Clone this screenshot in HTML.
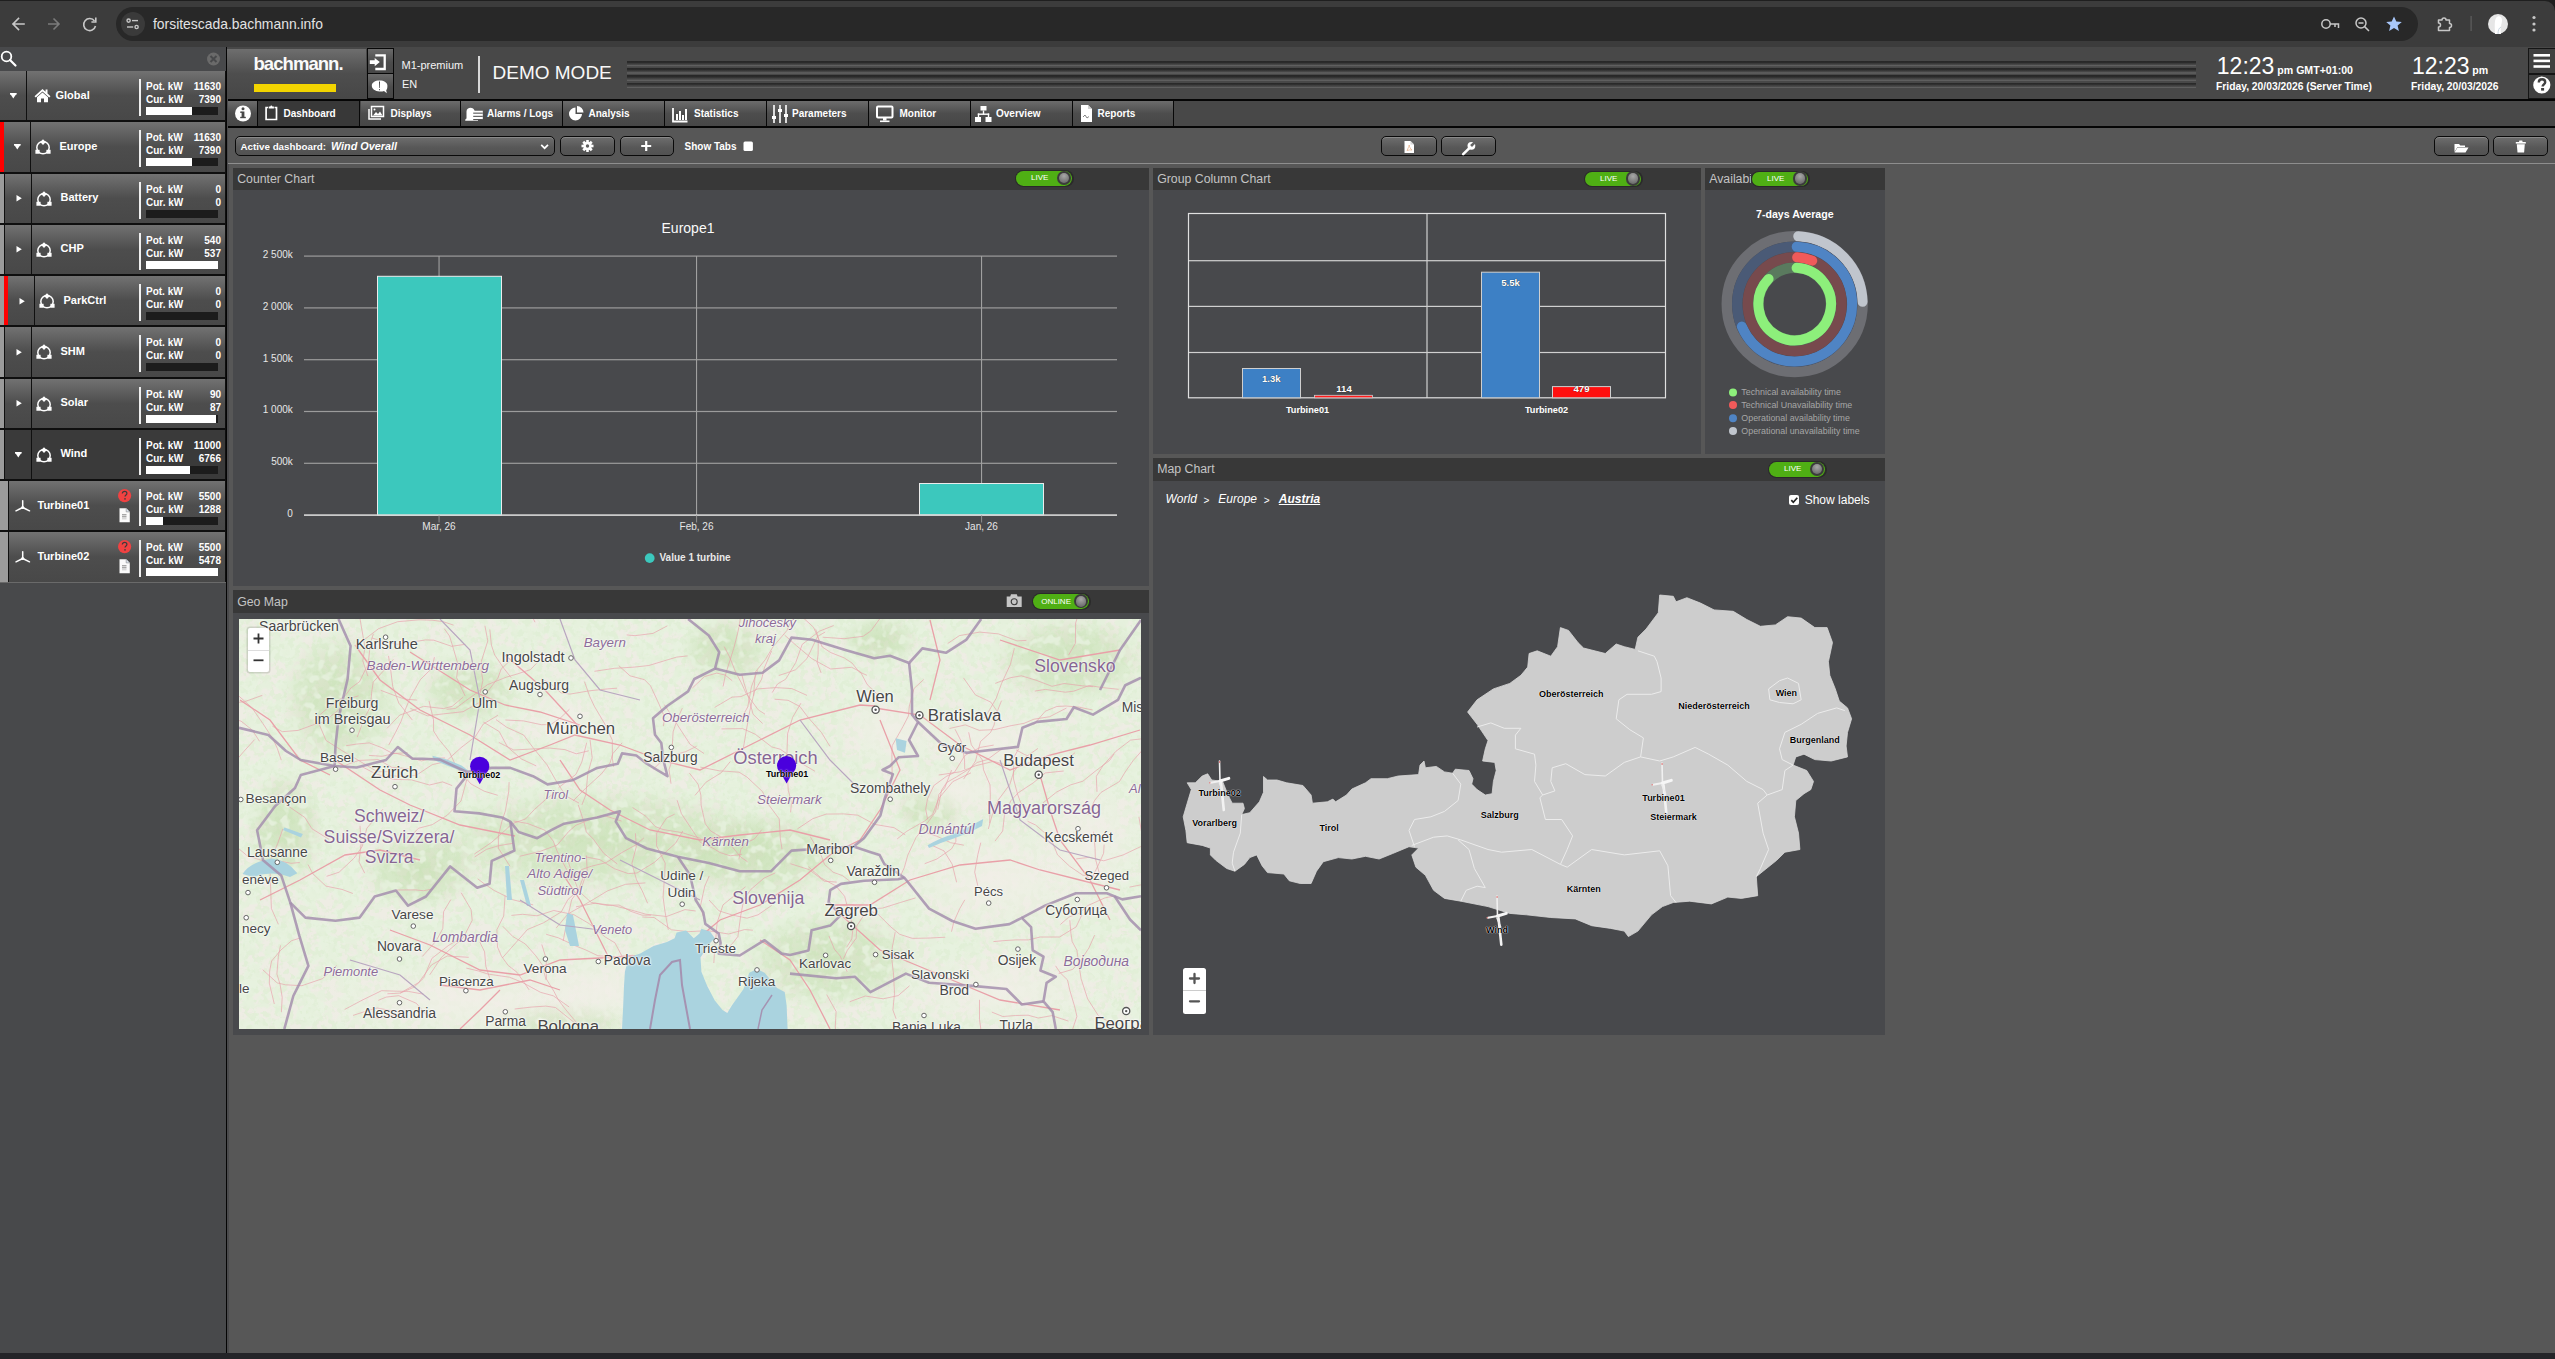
<!DOCTYPE html>
<html><head><meta charset="utf-8">
<style>
*{box-sizing:border-box;margin:0;padding:0}
html,body{width:2555px;height:1359px;overflow:hidden;background:#575757;font-family:"Liberation Sans",sans-serif;color:#fff}
.a{position:absolute}
.t{position:absolute;white-space:nowrap;line-height:1}
svg{position:absolute;overflow:visible}
.grad{background:linear-gradient(#727272 0%,#4d4d4d 50%,#484848 100%)}
.btn{position:absolute;border:1px solid #0a0a0a;border-radius:5px;background:linear-gradient(#6e6e6e,#575757 60%,#525252);box-shadow:inset 0 1px 0 #8a8a8a}
.ph{position:absolute;background:#383838}
.pb{position:absolute;background:#48494c}
.ptitle{position:absolute;font-size:12px;color:#c0c0c0;top:5px;left:5px;white-space:nowrap}
.tog{position:absolute;height:14px;border-radius:7px;background:#2f2f2f}
.tog b{position:absolute;left:1px;top:1px;bottom:1px;border-radius:6px;background:linear-gradient(#5cc21c,#3f9f0c);font-size:8px;color:#fff;text-align:center;line-height:12px;font-weight:bold}
.tog i{position:absolute;top:2px;width:10px;height:10px;border-radius:5px;background:#8a8a8a;border:1px solid #2a2a2a}
</style></head><body>


<div class="a" style="left:0;top:0;width:2555px;height:47px;background:#1f1f1f"></div>
<div class="a" style="left:0;top:1px;width:2555px;height:46px;background:#3c3c3c;border-top-right-radius:10px"></div>
<div class="a" style="left:116px;top:7px;width:2302px;height:34px;border-radius:17px;background:#282828"></div>
<div class="a" style="left:121px;top:12px;width:24px;height:24px;border-radius:12px;background:#3a3a3a"></div>
<svg style="left:0;top:0" width="2555" height="47">
 <g fill="none" stroke="#c7c7c7" stroke-width="1.6" stroke-linecap="square">
  <path d="M13 24 H24 M18.5 18.5 L13 24 L18.5 29.5"/>
 </g>
 <g fill="none" stroke="#7b7b7b" stroke-width="1.6">
  <path d="M48 24 H59 M53.5 18.5 L59 24 L53.5 29.5"/>
 </g>
 <g fill="none" stroke="#c7c7c7" stroke-width="1.6">
  <path d="M94.5 21 A6 6 0 1 0 95.5 26"/>
  <path d="M95.8 17.6 V22 H91.4" stroke-linejoin="miter"/>
 </g>
 <g fill="none" stroke="#c7c7c7" stroke-width="1.4">
  <circle cx="128.6" cy="20.6" r="1.6"/><path d="M132 20.6 H138"/>
  <circle cx="136.6" cy="27" r="1.6"/><path d="M127 27 H133.2"/>
 </g>
 <g fill="none" stroke="#c7c7c7" stroke-width="1.5">
  <circle cx="2326" cy="24" r="4.2"/><path d="M2330 24 H2338.5 V28 M2335 24 V27"/>
  <circle cx="2361" cy="23" r="5"/><path d="M2364.6 26.6 L2369 31 M2358.5 23 H2363.5"/>
  <path d="M2438.5 20 H2442 A2 2 0 0 1 2446 20 H2449.5 V23.5 A2 2 0 0 1 2449.5 27.5 V30.5 H2438.5 V27 A2 2 0 0 0 2438.5 23 Z" stroke-linejoin="round"/>
 </g>
 <path d="M2394 16.5 L2396.3 21.6 L2401.8 22 L2397.6 25.6 L2398.9 31 L2394 28.1 L2389.1 31 L2390.4 25.6 L2386.2 22 L2391.7 21.6 Z" fill="#a8c7fa"/>
 <rect x="2470.5" y="16" width="1.2" height="15" fill="#5f5f5f"/>
 <circle cx="2498" cy="24" r="10" fill="#e6e6e6"/>
 <path d="M2495 34 C2495 28 2494 22 2496 18 C2498 15 2502 16 2502 20 C2502 24 2500 27 2501 34 Z" fill="#ffffff"/>
 <path d="M2498 34 C2498 30 2499 28 2501 27" stroke="#c9d6e0" stroke-width="1" fill="none"/>
 <g fill="#c7c7c7"><circle cx="2534" cy="17.5" r="1.6"/><circle cx="2534" cy="24" r="1.6"/><circle cx="2534" cy="30" r="1.6"/></g>
</svg>
<div class="t" style="left:153px;top:18.3px;font-size:13.9px;color:#e3e3e3">forsitescada.bachmann.info</div>

<div class="a" style="left:0;top:47px;width:226px;height:1306px;background:#48494b"></div>
<div class="a" style="left:226px;top:47px;width:1.2px;height:1306px;background:#050505"></div><div class="a" style="left:227.2px;top:47px;width:1.5px;height:1306px;background:#4a4a4c"></div>
<div class="a" style="left:0;top:1353px;width:2555px;height:6px;background:#242428"></div>
<svg style="left:0;top:47px" width="226" height="24">
<circle cx="6.5" cy="9.5" r="4.8" fill="none" stroke="#fff" stroke-width="1.8"/>
<path d="M10 13 L15.5 18.5" stroke="#fff" stroke-width="2.2" stroke-linecap="round"/>
<circle cx="213.5" cy="12" r="6.5" fill="#6a6a6a"/>
<path d="M210.5 9 L216.5 15 M216.5 9 L210.5 15" stroke="#48494b" stroke-width="2"/>
</svg>
<div class="a" style="left:0;top:71px;width:226px;height:512px;background:#0f0f0f"></div>
<div class="a" style="left:0;top:71.0px;width:226px;height:49.25px;overflow:hidden"><div class="a grad" style="left:0px;top:0;width:26px;height:100%;"></div><svg style="left:10px;top:22px" width="8" height="7"><path d="M0 0.5 H6.6 L3.3 5.5Z" fill="#fff"/><rect x="0" y="0" width="6.6" height="1.6" fill="#fff"/></svg><div class="a" style="left:26px;top:0;width:1px;height:100%;background:#101010"></div><div class="a grad" style="left:27px;top:0;width:198px;height:100%;"></div><svg style="left:34px;top:17px" width="18" height="16"><path d="M8.5 1 L0.5 8.2 L1.8 9.5 L8.5 3.6 L15.2 9.5 L16.5 8.2 L13.5 5.4 V1.5 H11.6 V3.7 Z" fill="#fff"/><path d="M3 9.2 L8.5 4.6 L14 9.2 V14.2 H10 V10.6 H7 V14.2 H3Z" fill="#fff"/></svg><div class="t" style="left:55.5px;top:18.7px;font-size:11px;font-weight:bold">Global</div><div class="a" style="left:139px;top:8px;width:1.6px;height:37px;background:#f0f0f0"></div><div class="t" style="left:146px;top:11.2px;font-size:10px;font-weight:bold">Pot. kW</div><div class="t" style="right:5px;top:11.2px;font-size:10px;font-weight:bold">11630</div><div class="t" style="left:146px;top:24.2px;font-size:10px;font-weight:bold">Cur. kW</div><div class="t" style="right:5px;top:24.2px;font-size:10px;font-weight:bold">7390</div><div class="a" style="left:146px;top:36px;width:72px;height:8px;background:#1c1c1c"><div class="a" style="left:0;top:0;height:8px;width:45.7px;background:#fff"></div></div></div>
<div class="a" style="left:0;top:122.25px;width:226px;height:49.25px;overflow:hidden"><div class="a" style="left:0px;top:0;width:4px;height:100%;background:#ff0000"></div><div class="a grad" style="left:4px;top:0;width:26px;height:100%;"></div><svg style="left:14px;top:22px" width="8" height="7"><path d="M0 0.5 H6.6 L3.3 5.5Z" fill="#fff"/><rect x="0" y="0" width="6.6" height="1.6" fill="#fff"/></svg><div class="a" style="left:30px;top:0;width:1px;height:100%;background:#101010"></div><div class="a grad" style="left:31px;top:0;width:194px;height:100%;"></div><svg style="left:35.0px;top:17px" width="18" height="18"><circle cx="8" cy="8.6" r="6.2" fill="none" stroke="#fff" stroke-width="1.5"/>
<path d="M8 0.2 L10.8 3.1 L8 6 L5.2 3.1Z" fill="#fff"/><rect x="0.4" y="10.8" width="4.2" height="4" rx="0.3" fill="#fff"/><rect x="11.4" y="10.8" width="4.2" height="4" rx="0.3" fill="#fff"/></svg><div class="t" style="left:59.5px;top:18.7px;font-size:11px;font-weight:bold">Europe</div><div class="a" style="left:139px;top:8px;width:1.6px;height:37px;background:#f0f0f0"></div><div class="t" style="left:146px;top:11.2px;font-size:10px;font-weight:bold">Pot. kW</div><div class="t" style="right:5px;top:11.2px;font-size:10px;font-weight:bold">11630</div><div class="t" style="left:146px;top:24.2px;font-size:10px;font-weight:bold">Cur. kW</div><div class="t" style="right:5px;top:24.2px;font-size:10px;font-weight:bold">7390</div><div class="a" style="left:146px;top:36px;width:72px;height:8px;background:#1c1c1c"><div class="a" style="left:0;top:0;height:8px;width:45.7px;background:#fff"></div></div></div>
<div class="a" style="left:0;top:173.5px;width:226px;height:49.25px;overflow:hidden"><div class="a" style="left:0px;top:0;width:4px;height:100%;background:#9b9b9b"></div><div class="a" style="left:4px;top:0;width:1px;height:100%;background:#101010"></div><div class="a grad" style="left:5px;top:0;width:26px;height:100%;"></div><svg style="left:16px;top:21.5px" width="8" height="8"><path d="M0.5 0 V6.6 L5.8 3.3Z" fill="#fff"/></svg><div class="a" style="left:31px;top:0;width:1px;height:100%;background:#101010"></div><div class="a grad" style="left:32px;top:0;width:193px;height:100%;"></div><svg style="left:36.0px;top:17px" width="18" height="18"><circle cx="8" cy="8.6" r="6.2" fill="none" stroke="#fff" stroke-width="1.5"/>
<path d="M8 0.2 L10.8 3.1 L8 6 L5.2 3.1Z" fill="#fff"/><rect x="0.4" y="10.8" width="4.2" height="4" rx="0.3" fill="#fff"/><rect x="11.4" y="10.8" width="4.2" height="4" rx="0.3" fill="#fff"/></svg><div class="t" style="left:60.5px;top:18.7px;font-size:11px;font-weight:bold">Battery</div><div class="a" style="left:139px;top:8px;width:1.6px;height:37px;background:#f0f0f0"></div><div class="t" style="left:146px;top:11.2px;font-size:10px;font-weight:bold">Pot. kW</div><div class="t" style="right:5px;top:11.2px;font-size:10px;font-weight:bold">0</div><div class="t" style="left:146px;top:24.2px;font-size:10px;font-weight:bold">Cur. kW</div><div class="t" style="right:5px;top:24.2px;font-size:10px;font-weight:bold">0</div><div class="a" style="left:146px;top:36px;width:72px;height:8px;background:#1c1c1c"><div class="a" style="left:0;top:0;height:8px;width:0.0px;background:#fff"></div></div></div>
<div class="a" style="left:0;top:224.75px;width:226px;height:49.25px;overflow:hidden"><div class="a" style="left:0px;top:0;width:4px;height:100%;background:#9b9b9b"></div><div class="a" style="left:4px;top:0;width:1px;height:100%;background:#101010"></div><div class="a grad" style="left:5px;top:0;width:26px;height:100%;"></div><svg style="left:16px;top:21.5px" width="8" height="8"><path d="M0.5 0 V6.6 L5.8 3.3Z" fill="#fff"/></svg><div class="a" style="left:31px;top:0;width:1px;height:100%;background:#101010"></div><div class="a grad" style="left:32px;top:0;width:193px;height:100%;"></div><svg style="left:36.0px;top:17px" width="18" height="18"><circle cx="8" cy="8.6" r="6.2" fill="none" stroke="#fff" stroke-width="1.5"/>
<path d="M8 0.2 L10.8 3.1 L8 6 L5.2 3.1Z" fill="#fff"/><rect x="0.4" y="10.8" width="4.2" height="4" rx="0.3" fill="#fff"/><rect x="11.4" y="10.8" width="4.2" height="4" rx="0.3" fill="#fff"/></svg><div class="t" style="left:60.5px;top:18.7px;font-size:11px;font-weight:bold">CHP</div><div class="a" style="left:139px;top:8px;width:1.6px;height:37px;background:#f0f0f0"></div><div class="t" style="left:146px;top:11.2px;font-size:10px;font-weight:bold">Pot. kW</div><div class="t" style="right:5px;top:11.2px;font-size:10px;font-weight:bold">540</div><div class="t" style="left:146px;top:24.2px;font-size:10px;font-weight:bold">Cur. kW</div><div class="t" style="right:5px;top:24.2px;font-size:10px;font-weight:bold">537</div><div class="a" style="left:146px;top:36px;width:72px;height:8px;background:#1c1c1c"><div class="a" style="left:0;top:0;height:8px;width:72.0px;background:#fff"></div></div></div>
<div class="a" style="left:0;top:276.0px;width:226px;height:49.25px;overflow:hidden"><div class="a" style="left:0px;top:0;width:4px;height:100%;background:#9b9b9b"></div><div class="a" style="left:4px;top:0;width:4px;height:100%;background:#ff0000"></div><div class="a grad" style="left:8px;top:0;width:26px;height:100%;"></div><svg style="left:19px;top:21.5px" width="8" height="8"><path d="M0.5 0 V6.6 L5.8 3.3Z" fill="#fff"/></svg><div class="a" style="left:34px;top:0;width:1px;height:100%;background:#101010"></div><div class="a grad" style="left:35px;top:0;width:190px;height:100%;"></div><svg style="left:39.0px;top:17px" width="18" height="18"><circle cx="8" cy="8.6" r="6.2" fill="none" stroke="#fff" stroke-width="1.5"/>
<path d="M8 0.2 L10.8 3.1 L8 6 L5.2 3.1Z" fill="#fff"/><rect x="0.4" y="10.8" width="4.2" height="4" rx="0.3" fill="#fff"/><rect x="11.4" y="10.8" width="4.2" height="4" rx="0.3" fill="#fff"/></svg><div class="t" style="left:63.5px;top:18.7px;font-size:11px;font-weight:bold">ParkCtrl</div><div class="a" style="left:139px;top:8px;width:1.6px;height:37px;background:#f0f0f0"></div><div class="t" style="left:146px;top:11.2px;font-size:10px;font-weight:bold">Pot. kW</div><div class="t" style="right:5px;top:11.2px;font-size:10px;font-weight:bold">0</div><div class="t" style="left:146px;top:24.2px;font-size:10px;font-weight:bold">Cur. kW</div><div class="t" style="right:5px;top:24.2px;font-size:10px;font-weight:bold">0</div><div class="a" style="left:146px;top:36px;width:72px;height:8px;background:#1c1c1c"><div class="a" style="left:0;top:0;height:8px;width:0.0px;background:#fff"></div></div></div>
<div class="a" style="left:0;top:327.25px;width:226px;height:49.25px;overflow:hidden"><div class="a" style="left:0px;top:0;width:4px;height:100%;background:#9b9b9b"></div><div class="a" style="left:4px;top:0;width:1px;height:100%;background:#101010"></div><div class="a grad" style="left:5px;top:0;width:26px;height:100%;"></div><svg style="left:16px;top:21.5px" width="8" height="8"><path d="M0.5 0 V6.6 L5.8 3.3Z" fill="#fff"/></svg><div class="a" style="left:31px;top:0;width:1px;height:100%;background:#101010"></div><div class="a grad" style="left:32px;top:0;width:193px;height:100%;"></div><svg style="left:36.0px;top:17px" width="18" height="18"><circle cx="8" cy="8.6" r="6.2" fill="none" stroke="#fff" stroke-width="1.5"/>
<path d="M8 0.2 L10.8 3.1 L8 6 L5.2 3.1Z" fill="#fff"/><rect x="0.4" y="10.8" width="4.2" height="4" rx="0.3" fill="#fff"/><rect x="11.4" y="10.8" width="4.2" height="4" rx="0.3" fill="#fff"/></svg><div class="t" style="left:60.5px;top:18.7px;font-size:11px;font-weight:bold">SHM</div><div class="a" style="left:139px;top:8px;width:1.6px;height:37px;background:#f0f0f0"></div><div class="t" style="left:146px;top:11.2px;font-size:10px;font-weight:bold">Pot. kW</div><div class="t" style="right:5px;top:11.2px;font-size:10px;font-weight:bold">0</div><div class="t" style="left:146px;top:24.2px;font-size:10px;font-weight:bold">Cur. kW</div><div class="t" style="right:5px;top:24.2px;font-size:10px;font-weight:bold">0</div><div class="a" style="left:146px;top:36px;width:72px;height:8px;background:#1c1c1c"><div class="a" style="left:0;top:0;height:8px;width:0.0px;background:#fff"></div></div></div>
<div class="a" style="left:0;top:378.5px;width:226px;height:49.25px;overflow:hidden"><div class="a" style="left:0px;top:0;width:4px;height:100%;background:#9b9b9b"></div><div class="a" style="left:4px;top:0;width:1px;height:100%;background:#101010"></div><div class="a grad" style="left:5px;top:0;width:26px;height:100%;"></div><svg style="left:16px;top:21.5px" width="8" height="8"><path d="M0.5 0 V6.6 L5.8 3.3Z" fill="#fff"/></svg><div class="a" style="left:31px;top:0;width:1px;height:100%;background:#101010"></div><div class="a grad" style="left:32px;top:0;width:193px;height:100%;"></div><svg style="left:36.0px;top:17px" width="18" height="18"><circle cx="8" cy="8.6" r="6.2" fill="none" stroke="#fff" stroke-width="1.5"/>
<path d="M8 0.2 L10.8 3.1 L8 6 L5.2 3.1Z" fill="#fff"/><rect x="0.4" y="10.8" width="4.2" height="4" rx="0.3" fill="#fff"/><rect x="11.4" y="10.8" width="4.2" height="4" rx="0.3" fill="#fff"/></svg><div class="t" style="left:60.5px;top:18.7px;font-size:11px;font-weight:bold">Solar</div><div class="a" style="left:139px;top:8px;width:1.6px;height:37px;background:#f0f0f0"></div><div class="t" style="left:146px;top:11.2px;font-size:10px;font-weight:bold">Pot. kW</div><div class="t" style="right:5px;top:11.2px;font-size:10px;font-weight:bold">90</div><div class="t" style="left:146px;top:24.2px;font-size:10px;font-weight:bold">Cur. kW</div><div class="t" style="right:5px;top:24.2px;font-size:10px;font-weight:bold">87</div><div class="a" style="left:146px;top:36px;width:72px;height:8px;background:#1c1c1c"><div class="a" style="left:0;top:0;height:8px;width:70.2px;background:#fff"></div></div></div>
<div class="a" style="left:0;top:429.75px;width:226px;height:49.25px;overflow:hidden"><div class="a" style="left:0px;top:0;width:4px;height:100%;background:#9b9b9b"></div><div class="a" style="left:4px;top:0;width:1px;height:100%;background:#101010"></div><div class="a " style="left:5px;top:0;width:26px;height:100%;background:#3a3a3a"></div><svg style="left:15px;top:22px" width="8" height="7"><path d="M0 0.5 H6.6 L3.3 5.5Z" fill="#fff"/><rect x="0" y="0" width="6.6" height="1.6" fill="#fff"/></svg><div class="a" style="left:31px;top:0;width:1px;height:100%;background:#101010"></div><div class="a " style="left:32px;top:0;width:193px;height:100%;background:#3a3a3a"></div><svg style="left:36.0px;top:17px" width="18" height="18"><circle cx="8" cy="8.6" r="6.2" fill="none" stroke="#fff" stroke-width="1.5"/>
<path d="M8 0.2 L10.8 3.1 L8 6 L5.2 3.1Z" fill="#fff"/><rect x="0.4" y="10.8" width="4.2" height="4" rx="0.3" fill="#fff"/><rect x="11.4" y="10.8" width="4.2" height="4" rx="0.3" fill="#fff"/></svg><div class="t" style="left:60.5px;top:18.7px;font-size:11px;font-weight:bold">Wind</div><div class="a" style="left:139px;top:8px;width:1.6px;height:37px;background:#f0f0f0"></div><div class="t" style="left:146px;top:11.2px;font-size:10px;font-weight:bold">Pot. kW</div><div class="t" style="right:5px;top:11.2px;font-size:10px;font-weight:bold">11000</div><div class="t" style="left:146px;top:24.2px;font-size:10px;font-weight:bold">Cur. kW</div><div class="t" style="right:5px;top:24.2px;font-size:10px;font-weight:bold">6766</div><div class="a" style="left:146px;top:36px;width:72px;height:8px;background:#1c1c1c"><div class="a" style="left:0;top:0;height:8px;width:44.3px;background:#fff"></div></div></div>
<div class="a" style="left:0;top:481.0px;width:226px;height:49.25px;overflow:hidden"><div class="a" style="left:0px;top:0;width:8px;height:100%;background:#9b9b9b"></div><div class="a" style="left:8px;top:0;width:1px;height:100%;background:#101010"></div><div class="a grad" style="left:9px;top:0;width:216px;height:100%;"></div><svg style="left:14.5px;top:19px" width="18" height="14"><g stroke="#fff" stroke-width="1.5" stroke-linecap="round"><path d="M7.7 0.8 V7.5"/><path d="M7.7 7.5 L1 10.8"/><path d="M7.7 7.5 L14.5 10.8"/></g><circle cx="7.7" cy="7.5" r="1.6" fill="#fff"/></svg><div class="t" style="left:37.5px;top:18.7px;font-size:11px;font-weight:bold">Turbine01</div><svg style="left:118px;top:8px" width="14" height="14"><circle cx="6.6" cy="6.6" r="6.6" fill="#f04242"/><path d="M4.3 4.6 C4.3 3.2 5.3 2.4 6.6 2.4 C7.9 2.4 8.9 3.2 8.9 4.4 C8.9 5.9 7 6 7 7.6" fill="none" stroke="#3c3c3c" stroke-width="1.2"/><circle cx="7" cy="9.9" r="0.8" fill="#3c3c3c"/></svg><svg style="left:119px;top:27px" width="12" height="15"><path d="M0.5 0.3 H7.2 L10.8 3.9 V14.3 H0.5Z" fill="#fafafa"/><path d="M7.2 0.3 V3.9 H10.8" fill="#dde6f0" stroke="#777" stroke-width="0.5"/><path d="M3 6.8 H7.5 M3 8.8 H7.5" stroke="#666" stroke-width="0.8"/><path d="M3 10.8 H7.5" stroke="#bbb" stroke-width="0.8"/></svg><div class="a" style="left:139px;top:8px;width:1.6px;height:37px;background:#f0f0f0"></div><div class="t" style="left:146px;top:11.2px;font-size:10px;font-weight:bold">Pot. kW</div><div class="t" style="right:5px;top:11.2px;font-size:10px;font-weight:bold">5500</div><div class="t" style="left:146px;top:24.2px;font-size:10px;font-weight:bold">Cur. kW</div><div class="t" style="right:5px;top:24.2px;font-size:10px;font-weight:bold">1288</div><div class="a" style="left:146px;top:36px;width:72px;height:8px;background:#1c1c1c"><div class="a" style="left:0;top:0;height:8px;width:16.8px;background:#fff"></div></div></div>
<div class="a" style="left:0;top:532.25px;width:226px;height:49.25px;overflow:hidden"><div class="a" style="left:0px;top:0;width:8px;height:100%;background:#9b9b9b"></div><div class="a" style="left:8px;top:0;width:1px;height:100%;background:#101010"></div><div class="a grad" style="left:9px;top:0;width:216px;height:100%;"></div><svg style="left:14.5px;top:19px" width="18" height="14"><g stroke="#fff" stroke-width="1.5" stroke-linecap="round"><path d="M7.7 0.8 V7.5"/><path d="M7.7 7.5 L1 10.8"/><path d="M7.7 7.5 L14.5 10.8"/></g><circle cx="7.7" cy="7.5" r="1.6" fill="#fff"/></svg><div class="t" style="left:37.5px;top:18.7px;font-size:11px;font-weight:bold">Turbine02</div><svg style="left:118px;top:8px" width="14" height="14"><circle cx="6.6" cy="6.6" r="6.6" fill="#f04242"/><path d="M4.3 4.6 C4.3 3.2 5.3 2.4 6.6 2.4 C7.9 2.4 8.9 3.2 8.9 4.4 C8.9 5.9 7 6 7 7.6" fill="none" stroke="#3c3c3c" stroke-width="1.2"/><circle cx="7" cy="9.9" r="0.8" fill="#3c3c3c"/></svg><svg style="left:119px;top:27px" width="12" height="15"><path d="M0.5 0.3 H7.2 L10.8 3.9 V14.3 H0.5Z" fill="#fafafa"/><path d="M7.2 0.3 V3.9 H10.8" fill="#dde6f0" stroke="#777" stroke-width="0.5"/><path d="M3 6.8 H7.5 M3 8.8 H7.5" stroke="#666" stroke-width="0.8"/><path d="M3 10.8 H7.5" stroke="#bbb" stroke-width="0.8"/></svg><div class="a" style="left:139px;top:8px;width:1.6px;height:37px;background:#f0f0f0"></div><div class="t" style="left:146px;top:11.2px;font-size:10px;font-weight:bold">Pot. kW</div><div class="t" style="right:5px;top:11.2px;font-size:10px;font-weight:bold">5500</div><div class="t" style="left:146px;top:24.2px;font-size:10px;font-weight:bold">Cur. kW</div><div class="t" style="right:5px;top:24.2px;font-size:10px;font-weight:bold">5478</div><div class="a" style="left:146px;top:36px;width:72px;height:8px;background:#1c1c1c"><div class="a" style="left:0;top:0;height:8px;width:71.7px;background:#fff"></div></div></div>
<div class="a" style="left:0;top:581.5px;width:226px;height:1.5px;background:#6a6a6a"></div>

<div class="a" style="left:228px;top:47px;width:2327px;height:52px;background:#484848"></div>
<div class="a" style="left:228px;top:99px;width:2327px;height:1.6px;background:#050505"></div>
<div class="a grad" style="left:227px;top:49px;width:139px;height:49px;background:linear-gradient(#6e6e6e,#4e4e4e 50%,#474747)"></div>
<div class="t" style="left:253.5px;top:55.2px;font-size:18.5px;font-weight:bold;letter-spacing:-0.95px;color:#fafafa">bachmann.</div>
<div class="a" style="left:254px;top:84px;width:82px;height:8px;background:#f2d400"></div>
<div class="a" style="left:366.5px;top:48px;width:27px;height:26px;background:linear-gradient(#6a6a6a,#4c4c4c 55%,#474747);border:1.2px solid #080808"></div>
<div class="a" style="left:366.5px;top:73px;width:27px;height:26px;background:linear-gradient(#6a6a6a,#4c4c4c 55%,#474747);border:1.2px solid #080808"></div>
<svg style="left:366px;top:48px" width="28" height="51">
 <path d="M9.3 7.3 H18.7 V21 H9.3" fill="none" stroke="#fff" stroke-width="2.3"/>
 <path d="M3.8 12.2 H8.7 V10 L13.8 14.1 L8.7 18.2 V16 H3.8 Z" fill="#fff"/>
 <path d="M13.5 32.6 C9 32.6 5.8 34.6 5.8 37.8 C5.8 40.8 9 43.3 13.5 43.6 C15.5 43.7 17 43.3 18 43 L20.8 45.3 L20.2 42.2 C21.3 41.2 21.4 39.6 21.4 37.8 C21.4 34.6 18 32.6 13.5 32.6Z" fill="#fff"/><path d="M13 33.5 L14 33.5 L13.8 40 L13.2 40Z M13.1 41 H13.9 V42.3 H13.1Z" fill="#3a3a3a"/>
</svg>
<div class="t" style="left:401.5px;top:60.1px;font-size:11px;color:#f4f4f4">M1-premium</div>
<div class="t" style="left:402px;top:79px;font-size:11px;color:#f4f4f4">EN</div>
<div class="a" style="left:478px;top:56px;width:1.5px;height:37px;background:#d8d8d8"></div>
<div class="t" style="left:492.5px;top:63px;font-size:19px;color:#f8f8f8">DEMO MODE</div>

<div class="a" style="left:627px;top:61px;width:1569px;height:27px;background:repeating-linear-gradient(#272727 0px,#2b2b2b 1.5px,#444 3.2px,#4a4a4a 4px,#5f5f5f 4.4px,#5f5f5f 5.2px,#484848 5.6px,#484848 7.2px)"></div>

<div class="t" style="left:2216.8px;top:54.7px;font-size:23px;color:#fff">12:23</div>
<div class="t" style="left:2277.3px;top:65.3px;font-size:10.6px;font-weight:bold;color:#fff">pm GMT+01:00</div>
<div class="t" style="left:2216px;top:82px;font-size:10.3px;font-weight:bold;color:#fff">Friday, 20/03/2026 (Server Time)</div>
<div class="t" style="left:2412px;top:54.7px;font-size:23px;color:#fff">12:23</div>
<div class="t" style="left:2472.3px;top:65.3px;font-size:10.6px;font-weight:bold;color:#fff">pm</div>
<div class="t" style="left:2411px;top:82px;font-size:10.3px;font-weight:bold;color:#fff">Friday, 20/03/2026</div>
<div class="a" style="left:2528px;top:48px;width:28px;height:26px;background:#404040;border:1px solid #151515;border-right:none"></div>
<div class="a" style="left:2528px;top:73.5px;width:28px;height:25.5px;background:#404040;border:1px solid #151515;border-right:none"></div>
<svg style="left:2528px;top:48px" width="27" height="51">
 <rect x="5.5" y="6" width="16.5" height="2.6" fill="#fff"/><rect x="5.5" y="11.6" width="16.5" height="2.6" fill="#fff"/><rect x="5.5" y="17.2" width="16.5" height="2.6" fill="#fff"/>
 <circle cx="13.8" cy="37" r="8.6" fill="#fff"/>
 <path d="M10.8 34.5 C10.8 32.5 12.2 31.3 14 31.3 C15.9 31.3 17.2 32.5 17.2 34.2 C17.2 36.3 14.6 36.5 14.6 38.6" fill="none" stroke="#404040" stroke-width="2.4"/>
 <rect x="13.1" y="40" width="3" height="2.6" fill="#404040"/>
</svg>

<div class="a" style="left:228px;top:100.5px;width:2327px;height:27px;background:#484848"></div>
<div class="a" style="left:228px;top:126px;width:2327px;height:1.5px;background:#050505"></div>
<div class="a" style="left:228px;top:100.7px;width:29px;height:25.3px;background:linear-gradient(#6c6c6c,#4d4d4d 50%,#474747)"></div>
<div class="a" style="left:257px;top:100.7px;width:1.2px;height:25.3px;background:#080808"></div>
<div class="a" style="left:258px;top:100.7px;width:101px;height:25.3px;background:#383838"></div>
<div class="a" style="left:359px;top:100.7px;width:1.2px;height:25.3px;background:#080808"></div>
<div class="t" style="left:283.5px;top:109px;font-size:10px;font-weight:bold">Dashboard</div>
<div class="a" style="left:360.5px;top:100.7px;width:99.5px;height:25.3px;background:linear-gradient(#6c6c6c,#4d4d4d 50%,#474747)"></div>
<div class="a" style="left:460px;top:100.7px;width:1.2px;height:25.3px;background:#080808"></div>
<div class="t" style="left:390.5px;top:109px;font-size:10px;font-weight:bold">Displays</div>
<div class="a" style="left:461px;top:100.7px;width:101px;height:25.3px;background:linear-gradient(#6c6c6c,#4d4d4d 50%,#474747)"></div>
<div class="a" style="left:562px;top:100.7px;width:1.2px;height:25.3px;background:#080808"></div>
<div class="t" style="left:487px;top:109px;font-size:10px;font-weight:bold">Alarms / Logs</div>
<div class="a" style="left:563px;top:100.7px;width:101px;height:25.3px;background:linear-gradient(#6c6c6c,#4d4d4d 50%,#474747)"></div>
<div class="a" style="left:664px;top:100.7px;width:1.2px;height:25.3px;background:#080808"></div>
<div class="t" style="left:588.5px;top:109px;font-size:10px;font-weight:bold">Analysis</div>
<div class="a" style="left:665px;top:100.7px;width:101px;height:25.3px;background:linear-gradient(#6c6c6c,#4d4d4d 50%,#474747)"></div>
<div class="a" style="left:766px;top:100.7px;width:1.2px;height:25.3px;background:#080808"></div>
<div class="t" style="left:694px;top:109px;font-size:10px;font-weight:bold">Statistics</div>
<div class="a" style="left:767px;top:100.7px;width:101px;height:25.3px;background:linear-gradient(#6c6c6c,#4d4d4d 50%,#474747)"></div>
<div class="a" style="left:868px;top:100.7px;width:1.2px;height:25.3px;background:#080808"></div>
<div class="t" style="left:792px;top:109px;font-size:10px;font-weight:bold">Parameters</div>
<div class="a" style="left:869px;top:100.7px;width:101px;height:25.3px;background:linear-gradient(#6c6c6c,#4d4d4d 50%,#474747)"></div>
<div class="a" style="left:970px;top:100.7px;width:1.2px;height:25.3px;background:#080808"></div>
<div class="t" style="left:899.5px;top:109px;font-size:10px;font-weight:bold">Monitor</div>
<div class="a" style="left:970.5px;top:100.7px;width:101.5px;height:25.3px;background:linear-gradient(#6c6c6c,#4d4d4d 50%,#474747)"></div>
<div class="a" style="left:1072px;top:100.7px;width:1.2px;height:25.3px;background:#080808"></div>
<div class="t" style="left:996px;top:109px;font-size:10px;font-weight:bold">Overview</div>
<div class="a" style="left:1072.5px;top:100.7px;width:100.5px;height:25.3px;background:linear-gradient(#6c6c6c,#4d4d4d 50%,#474747)"></div>
<div class="a" style="left:1173px;top:100.7px;width:1.2px;height:25.3px;background:#080808"></div>
<div class="t" style="left:1097.5px;top:109px;font-size:10px;font-weight:bold">Reports</div>
<svg style="left:228px;top:100px" width="960" height="27">
 <circle cx="15" cy="13.5" r="8" fill="#fff"/><rect x="13.6" y="11.5" width="2.8" height="6.5" fill="#484848"/><rect x="12.2" y="11.5" width="2" height="1.4" fill="#484848"/><rect x="12.2" y="16.8" width="5.6" height="1.4" fill="#484848"/><circle cx="15" cy="8.8" r="1.5" fill="#484848"/>
 <g transform="translate(-2.5,-2)"><path d="M42.5 9.5 H40.6 V21.5 H51 V9.5 H49" fill="none" stroke="#fff" stroke-width="1.7"/><path d="M43.2 10.5 V8.6 H44.8 A1 1 0 0 1 46.8 8.6 H48.4 V10.5Z" fill="#fff"/></g>
 <g transform="translate(139,5)"><rect x="4.5" y="1.5" width="12" height="10" fill="none" stroke="#fff" stroke-width="1.5"/><path d="M2 4 V14 H14" fill="none" stroke="#fff" stroke-width="1.5"/><path d="M6 10.5 L9 7 L11 9 L13 6.5 L15.5 10.5Z" fill="#fff"/><circle cx="7.5" cy="4.5" r="1" fill="#fff"/></g>
 <g transform="translate(237,5)"><path d="M0.2 15.7 C0.2 14.2 1 13.6 1.5 13.5 L1.5 6.5 C1.5 4 3.5 2.8 5.5 2.8 C7.5 2.8 9 3.8 9.6 5.7 H17.8 V14.2 H13 V15.7Z" fill="#fff"/><rect x="8.2" y="7.6" width="9.6" height="1.1" fill="#555"/><rect x="8.2" y="10.8" width="9.6" height="1.1" fill="#555"/><rect x="8.2" y="14" width="9.6" height="1.1" fill="#555"/></g>
 <g transform="translate(340,2.5)"><path d="M7.5 5 A6.5 6.5 0 1 0 14 11.5 H7.5Z" fill="#fff"/><path d="M9 3.5 A6.5 6.5 0 0 1 15.5 10 H9Z" fill="#fff"/></g>
 <g transform="translate(444,5)"><path d="M1 3 V16.5 H15.5" fill="none" stroke="#fff" stroke-width="1.8"/><rect x="4" y="9" width="2" height="6" fill="#fff"/><rect x="7" y="6" width="2" height="9" fill="#fff"/><rect x="10" y="10" width="2" height="5" fill="#fff"/><rect x="13" y="4" width="2" height="11" fill="#fff"/></g>
 <g transform="translate(544,4)" fill="#fff"><rect x="1.2" y="1" width="1.6" height="18"/><rect x="0" y="12" width="4" height="3"/><rect x="7.2" y="1" width="1.6" height="18"/><rect x="6" y="5" width="4" height="3"/><rect x="13.2" y="1" width="1.6" height="18"/><rect x="12" y="10" width="4" height="3"/></g>
 <g transform="translate(648,5)"><rect x="1" y="1.5" width="15.5" height="11" rx="1" fill="none" stroke="#fff" stroke-width="2"/><rect x="7" y="13" width="3.5" height="2.5" fill="#fff"/><rect x="4" y="15.5" width="9.5" height="1.6" fill="#fff"/></g>
 <g transform="translate(747,5)" fill="#fff"><rect x="5.5" y="1" width="6" height="4.5"/><rect x="7.8" y="5.5" width="1.4" height="4"/><rect x="2.8" y="8.5" width="11.4" height="1.4"/><rect x="2.8" y="8.5" width="1.4" height="4"/><rect x="12.8" y="8.5" width="1.4" height="4"/><rect x="0" y="12" width="6" height="5"/><rect x="10.5" y="12" width="6" height="5"/></g>
 <g transform="translate(852,4)"><path d="M1 1 H8 L12 5 V18 H1Z" fill="#fff"/><path d="M8 1 V5 H12" fill="#d0d0d0"/><path d="M3 13 L5 11 L7 14 L9 12.5" stroke="#666" stroke-width="0.8" fill="none"/></g>
</svg>
<div class="a" style="left:228px;top:127.5px;width:2327px;height:36px;background:#575757"></div>
<div class="a" style="left:228px;top:163px;width:2327px;height:1.3px;background:#8e8e8e"></div>
<div class="btn" style="left:235px;top:136.3px;width:320px;height:19.5px"></div>
<div class="btn" style="left:560px;top:136.3px;width:55px;height:19.5px"></div>
<div class="btn" style="left:619.5px;top:136.3px;width:54.0px;height:19.5px"></div>
<div class="btn" style="left:1381px;top:136.3px;width:56px;height:19.5px"></div>
<div class="btn" style="left:1441px;top:136.3px;width:55px;height:19.5px"></div>
<div class="btn" style="left:2434px;top:136.3px;width:55px;height:19.5px"></div>
<div class="btn" style="left:2493px;top:136.3px;width:55px;height:19.5px"></div>

<div class="t" style="left:240.5px;top:141.6px;font-size:9.8px;font-weight:bold">Active dashboard:</div>
<div class="t" style="left:331px;top:141.2px;font-size:10.8px;font-weight:bold;font-style:italic">Wind Overall</div>
<svg style="left:0;top:127px" width="2555" height="36">
 <path d="M541.2 17.8 L544.6 21.2 L548 17.8" fill="none" stroke="#fff" stroke-width="1.7"/>
 <g transform="translate(587.5,19)"><circle r="4.2" fill="#fff"/><g fill="#fff"><rect x="-1.3" y="-6" width="2.6" height="12"/><rect x="-6" y="-1.3" width="12" height="2.6"/><rect x="-1.3" y="-6" width="2.6" height="12" transform="rotate(45)"/><rect x="-1.3" y="-6" width="2.6" height="12" transform="rotate(-45)"/></g><circle r="1.7" fill="#5e5e5e"/></g>
 <path d="M646.2 14 V24 M641.2 19 H651.2" stroke="#fff" stroke-width="2.2"/>
 <rect x="743.5" y="14.5" width="9.4" height="9.5" rx="1.5" fill="#fff"/>
 <g transform="translate(1404,13.5)"><path d="M0.5 0.5 H6.5 L10 4 V12.5 H0.5Z" fill="#fff"/><path d="M6.5 0.5 V4 H10" fill="#d8d8d8"/><path d="M3 10 C4 8 5 6 5.2 4.5 C5.4 6.5 6.5 8.5 8 9.5 C6.5 9.2 4.5 9.5 3 10Z" fill="none" stroke="#e0a070" stroke-width="0.6"/></g>
 <g transform="translate(1461,13)"><path d="M2.2 14.2 L8.6 7.8" stroke="#fff" stroke-width="2.6" stroke-linecap="round"/><circle cx="10.4" cy="5.8" r="3.9" fill="#fff"/><rect x="10.6" y="1.6" width="2.6" height="5.2" fill="#636363" transform="rotate(45 11.9 4.2)"/></g>
 <g transform="translate(2454,14)"><path d="M0.5 3 H5 L6.3 4.5 H11 V6 H3.5 L0.5 11Z" fill="#fff"/><path d="M0.5 11.5 L3.5 6.5 H14.5 L11.5 11.5Z" fill="#fff"/></g>
 <g transform="translate(2515.8,13.6)" fill="#fff"><rect x="0" y="1.4" width="10" height="1.6"/><rect x="3.3" y="0" width="3.4" height="1.6" rx="0.5"/><path d="M1 3.6 H9 L8.3 12 H1.7Z"/></g>
</svg>
<div class="t" style="left:684.5px;top:141.5px;font-size:10px;font-weight:bold">Show Tabs</div>

<div class="ph" style="left:233px;top:168px;width:916px;height:22px"></div>
<div class="pb" style="left:233px;top:190px;width:916px;height:395.5px"></div>
<div class="t" style="left:237.2px;top:172.2px;font-size:12.3px;color:#c4c4c4;line-height:1.2">Counter Chart</div>
<div class="ph" style="left:233px;top:590.3px;width:916px;height:22.40000000000009px"></div>
<div class="pb" style="left:233px;top:612.7px;width:916px;height:422.20000000000005px"></div>
<div class="t" style="left:237.2px;top:594.5px;font-size:12.3px;color:#c4c4c4;line-height:1.2">Geo Map</div>
<div class="ph" style="left:1153px;top:168.2px;width:547.7px;height:21.5px"></div>
<div class="pb" style="left:1153px;top:189.7px;width:547.7px;height:264.0px"></div>
<div class="t" style="left:1157.2px;top:172.39999999999998px;font-size:12.3px;color:#c4c4c4;line-height:1.2">Group Column Chart</div>
<div class="ph" style="left:1705px;top:168.2px;width:180px;height:21.5px"></div>
<div class="pb" style="left:1705px;top:189.7px;width:180px;height:264.0px"></div>
<div class="t" style="left:1709.2px;top:172.39999999999998px;font-size:12.3px;color:#c4c4c4;width:42px;overflow:hidden;line-height:1.2">Availability</div>
<div class="ph" style="left:1153px;top:458.2px;width:732px;height:22.600000000000023px"></div>
<div class="pb" style="left:1153px;top:480.8px;width:732px;height:554.2px"></div>
<div class="t" style="left:1157.2px;top:462.4px;font-size:12.3px;color:#c4c4c4;line-height:1.2">Map Chart</div>
<div class="a" style="left:1015px;top:170px;width:59px;height:16.5px;border-radius:8.25px;background:#2a2a2a"></div><div class="a" style="left:1016px;top:171.1px;width:56px;height:14.8px;border-radius:7.4px;background:#4faf14"></div><div class="t" style="left:1031px;top:174.3px;font-size:8px;color:#fff">LIVE</div><div class="a" style="left:1056.8px;top:170.70000000000002px;width:14.4px;height:14.4px;border-radius:7.2px;background:#3b3b3b"></div><div class="a" style="left:1058.6px;top:172.5px;width:10.8px;height:10.8px;border-radius:5.4px;background:radial-gradient(circle at 50% 30%,#a8a8a8,#707070 75%)"></div>
<div class="a" style="left:1584px;top:170.5px;width:59px;height:16.5px;border-radius:8.25px;background:#2a2a2a"></div><div class="a" style="left:1585px;top:171.6px;width:56px;height:14.8px;border-radius:7.4px;background:#4faf14"></div><div class="t" style="left:1600px;top:174.8px;font-size:8px;color:#fff">LIVE</div><div class="a" style="left:1625.8px;top:171.20000000000002px;width:14.4px;height:14.4px;border-radius:7.2px;background:#3b3b3b"></div><div class="a" style="left:1627.6px;top:173.0px;width:10.8px;height:10.8px;border-radius:5.4px;background:radial-gradient(circle at 50% 30%,#a8a8a8,#707070 75%)"></div>
<div class="a" style="left:1751px;top:170.5px;width:59px;height:16.5px;border-radius:8.25px;background:#2a2a2a"></div><div class="a" style="left:1752px;top:171.6px;width:56px;height:14.8px;border-radius:7.4px;background:#4faf14"></div><div class="t" style="left:1767px;top:174.8px;font-size:8px;color:#fff">LIVE</div><div class="a" style="left:1792.8px;top:171.20000000000002px;width:14.4px;height:14.4px;border-radius:7.2px;background:#3b3b3b"></div><div class="a" style="left:1794.6px;top:173.0px;width:10.8px;height:10.8px;border-radius:5.4px;background:radial-gradient(circle at 50% 30%,#a8a8a8,#707070 75%)"></div>
<div class="a" style="left:1768px;top:461px;width:59px;height:16.5px;border-radius:8.25px;background:#2a2a2a"></div><div class="a" style="left:1769px;top:462.1px;width:56px;height:14.8px;border-radius:7.4px;background:#4faf14"></div><div class="t" style="left:1784px;top:465.3px;font-size:8px;color:#fff">LIVE</div><div class="a" style="left:1809.8px;top:461.7px;width:14.4px;height:14.4px;border-radius:7.2px;background:#3b3b3b"></div><div class="a" style="left:1811.6px;top:463.5px;width:10.8px;height:10.8px;border-radius:5.4px;background:radial-gradient(circle at 50% 30%,#a8a8a8,#707070 75%)"></div>
<div class="a" style="left:1032px;top:593.3px;width:59px;height:16.5px;border-radius:8.25px;background:#2a2a2a"></div><div class="a" style="left:1033px;top:594.4px;width:56px;height:14.8px;border-radius:7.4px;background:#4faf14"></div><div class="t" style="left:1041.2px;top:597.5999999999999px;font-size:8px;color:#fff">ONLINE</div><div class="a" style="left:1073.8px;top:593.9999999999999px;width:14.4px;height:14.4px;border-radius:7.2px;background:#3b3b3b"></div><div class="a" style="left:1075.6px;top:595.8px;width:10.8px;height:10.8px;border-radius:5.4px;background:radial-gradient(circle at 50% 30%,#a8a8a8,#707070 75%)"></div>
<svg style="left:1006px;top:593px" width="17" height="16"><path d="M0.7 3.5 H4.2 L5 1.2 H10.8 L11.6 3.5 H15.7 V14.1 H0.7Z" fill="#c6c6c6"/><circle cx="8.2" cy="8.8" r="3" fill="none" stroke="#3a3a3a" stroke-width="1.1"/></svg>
<svg style="left:0;top:0" width="1160" height="600"><rect x="304" y="255.5" width="813" height="1.2" fill="#9c9c9c"/><rect x="304" y="307.3" width="813" height="1.2" fill="#9c9c9c"/><rect x="304" y="359.1" width="813" height="1.2" fill="#9c9c9c"/><rect x="304" y="410.9" width="813" height="1.2" fill="#9c9c9c"/><rect x="304" y="462.7" width="813" height="1.2" fill="#9c9c9c"/><rect x="438.5" y="256" width="1.1" height="259" fill="#a0a0a0"/><rect x="696.0" y="256" width="1.1" height="259" fill="#a0a0a0"/><rect x="981.0" y="256" width="1.1" height="259" fill="#a0a0a0"/><rect x="377.5" y="276.3" width="124" height="239" fill="#3cc8bd" stroke="#ececec" stroke-width="1"/><rect x="919.5" y="483.5" width="124" height="31.5" fill="#3cc8bd" stroke="#ececec" stroke-width="1"/><rect x="304" y="514.3" width="813" height="1.6" fill="#d8d8d8"/><rect x="438.5" y="515.5" width="1.1" height="7" fill="#888"/><rect x="696.0" y="515.5" width="1.1" height="7" fill="#888"/><rect x="981.0" y="515.5" width="1.1" height="7" fill="#888"/><circle cx="649.7" cy="558.1" r="4.9" fill="#3cc8bd"/></svg>
<div class="t" style="right:2262.2px;top:250px;font-size:10px;color:#e6e6e6">2 500k</div>
<div class="t" style="right:2262.2px;top:301.8px;font-size:10px;color:#e6e6e6">2 000k</div>
<div class="t" style="right:2262.2px;top:353.6px;font-size:10px;color:#e6e6e6">1 500k</div>
<div class="t" style="right:2262.2px;top:405.4px;font-size:10px;color:#e6e6e6">1 000k</div>
<div class="t" style="right:2262.2px;top:457.2px;font-size:10px;color:#e6e6e6">500k</div>
<div class="t" style="right:2262.2px;top:509px;font-size:10px;color:#e6e6e6">0</div>
<div class="t" style="left:399px;width:80px;text-align:center;top:521.6px;font-size:10px;color:#e6e6e6">Mar, 26</div>
<div class="t" style="left:656.5px;width:80px;text-align:center;top:521.6px;font-size:10px;color:#e6e6e6">Feb, 26</div>
<div class="t" style="left:941.5px;width:80px;text-align:center;top:521.6px;font-size:10px;color:#e6e6e6">Jan, 26</div>
<div class="t" style="left:588px;width:200px;text-align:center;top:221px;font-size:14px;color:#fafafa">Europe1</div>
<div class="t" style="left:659.5px;top:553.2px;font-size:10px;font-weight:bold;color:#e8e8e8">Value 1 turbine</div>
<svg style="left:0;top:0" width="1900" height="460"><rect x="1188.5" y="260.09999999999997" width="477" height="1.2" fill="#d0d0d0"/><rect x="1188.5" y="305.79999999999995" width="477" height="1.2" fill="#d0d0d0"/><rect x="1188.5" y="351.9" width="477" height="1.2" fill="#d0d0d0"/><rect x="1426.4" y="213.4" width="1.2" height="184.4" fill="#d0d0d0"/><rect x="1188.5" y="213.5" width="477" height="184.3" fill="none" stroke="#e0e0e0" stroke-width="1.2"/><rect x="1242.5" y="368.5" width="58" height="29.3" fill="#3d80c5" stroke="#cfcfcf" stroke-width="1"/><rect x="1314.5" y="395.3" width="58" height="2.5" fill="#ff1a1a" stroke="#cfcfcf" stroke-width="0.8"/><rect x="1481.5" y="272.2" width="58" height="125.6" fill="#3d80c5" stroke="#cfcfcf" stroke-width="1"/><rect x="1552.5" y="386.6" width="58" height="11.2" fill="#ff0f0f" stroke="#cfcfcf" stroke-width="1"/></svg>
<div class="t" style="left:1121.3px;width:300px;text-align:center;top:373.7px;font-size:9.6px;font-weight:bold;color:#fff;text-shadow:0 0 1px #222">1.3k</div>
<div class="t" style="left:1194.0px;width:300px;text-align:center;top:383.9px;font-size:9.6px;font-weight:bold;color:#fff;text-shadow:0 0 1px #222">114</div>
<div class="t" style="left:1360.5px;width:300px;text-align:center;top:277.7px;font-size:9.6px;font-weight:bold;color:#fff;text-shadow:0 0 1px #222">5.5k</div>
<div class="t" style="left:1431.5px;width:300px;text-align:center;top:383.9px;font-size:9.6px;font-weight:bold;color:#fff;text-shadow:0 0 1px #222">479</div>
<div class="t" style="left:1157.5px;width:300px;text-align:center;top:406.1px;font-size:9.2px;font-weight:bold;color:#fff">Turbine01</div>
<div class="t" style="left:1396.5px;width:300px;text-align:center;top:406.1px;font-size:9.2px;font-weight:bold;color:#fff">Turbine02</div>
<svg style="left:0;top:0" width="1900" height="460"><circle cx="1794.7" cy="304.1" r="67.9" fill="none" stroke="#6d6e73" stroke-width="10.5"/><path d="M1798.25 236.29 A67.9 67.9 0 0 1 1862.56 301.73" fill="none" stroke="#c0c5cd" stroke-width="10" stroke-linecap="round"/><circle cx="1794.7" cy="304.1" r="57.4" fill="none" stroke="#4a5a76" stroke-width="10.5"/><path d="M1796.70 246.73 A57.4 57.4 0 1 1 1741.86 326.53" fill="none" stroke="#4f84c4" stroke-width="10" stroke-linecap="round"/><circle cx="1794.7" cy="304.1" r="46.8" fill="none" stroke="#774a4d" stroke-width="10.5"/><path d="M1797.15 257.36 A46.8 46.8 0 0 1 1812.23 260.71" fill="none" stroke="#f05a5a" stroke-width="10" stroke-linecap="round"/><circle cx="1794.7" cy="304.1" r="36.3" fill="none" stroke="#5a7a5e" stroke-width="10.5"/><path d="M1796.60 267.85 A36.3 36.3 0 1 1 1768.59 278.88" fill="none" stroke="#8def7b" stroke-width="10" stroke-linecap="round"/><circle cx="1733" cy="392.4" r="4" fill="#8def7b"/><circle cx="1733" cy="405.1" r="4" fill="#f05a5a"/><circle cx="1733" cy="418.2" r="4" fill="#4f84c4"/><circle cx="1733" cy="430.9" r="4" fill="#c0c5cd"/></svg>
<div class="t" style="left:1644.8px;width:300px;text-align:center;top:209.3px;font-size:10.6px;font-weight:bold;color:#fff">7-days Average</div>
<div class="t" style="left:1741.3px;top:388.4px;font-size:8.9px;color:#a6a6a6">Technical availability time</div>
<div class="t" style="left:1741.3px;top:401.1px;font-size:8.9px;color:#a6a6a6">Technical Unavailability time</div>
<div class="t" style="left:1741.3px;top:414.2px;font-size:8.9px;color:#a6a6a6">Operational availability time</div>
<div class="t" style="left:1741.3px;top:426.9px;font-size:8.9px;color:#a6a6a6">Operational unavailability time</div>
<svg style="left:0;top:0" width="1900" height="1040"><polygon points="1187.2,782.8 1195.4,782.8 1202.2,776.0 1207.7,773.8 1211.7,780.0 1222.6,781.4 1228.0,795.0 1232.2,803.2 1243.0,803.2 1244.4,808.6 1241.7,814.6 1249.8,812.7 1259.4,801.8 1263.5,792.3 1263.5,776.5 1267.5,780.0 1277.0,780.0 1286.6,782.8 1302.9,785.5 1311.1,795.0 1312.4,803.2 1327.4,801.8 1332.9,799.1 1335.6,801.8 1346.5,795.0 1351.9,789.0 1365.5,782.8 1371.0,778.7 1387.3,778.7 1398.2,776.0 1418.6,774.6 1420.0,765.1 1424.0,761.0 1425.4,767.8 1436.3,766.4 1444.5,771.9 1452.6,773.2 1455.3,769.2 1469.0,770.5 1473.0,778.7 1471.7,784.1 1477.1,789.6 1485.3,795.0 1492.1,793.7 1493.4,781.4 1496.2,770.5 1494.8,762.4 1482.6,761.0 1485.3,748.8 1488.0,740.6 1477.1,724.3 1467.6,712.0 1477.1,699.8 1493.4,688.9 1509.8,683.4 1520.9,675.3 1527.7,667.1 1529.1,653.5 1537.2,650.8 1550.8,656.2 1557.6,646.7 1560.4,627.6 1568.5,630.4 1578.0,642.6 1583.5,648.0 1605.3,653.5 1616.2,644.0 1624.3,646.7 1635.2,649.4 1637.9,637.2 1646.1,629.0 1658.3,612.7 1659.7,595.0 1673.3,596.3 1676.0,601.8 1686.9,597.7 1700.5,603.1 1714.1,609.9 1733.2,611.3 1746.8,619.5 1760.4,626.3 1775.4,624.9 1787.6,616.7 1801.2,618.1 1814.8,627.6 1827.1,627.6 1832.5,642.6 1828.4,661.7 1829.8,675.3 1835.3,688.9 1839.3,701.1 1847.5,707.9 1851.6,718.8 1847.5,732.4 1846.1,746.0 1847.5,756.9 1831.2,761.0 1814.8,759.6 1804.0,754.2 1795.8,756.9 1793.1,765.1 1806.7,770.5 1813.5,781.4 1810.8,789.6 1804.0,793.7 1795.8,800.5 1794.4,816.8 1798.5,833.1 1799.9,849.5 1784.9,852.2 1776.7,860.3 1763.1,871.2 1756.3,876.7 1757.7,895.7 1741.4,898.4 1727.8,897.1 1711.4,903.9 1689.6,901.2 1673.3,902.5 1662.4,906.6 1651.5,914.8 1637.9,931.1 1628.4,936.6 1624.3,931.1 1610.7,928.4 1591.7,925.7 1575.3,918.9 1550.8,917.5 1526.3,914.8 1509.8,913.4 1488.0,906.6 1460.8,901.2 1444.5,898.4 1433.6,890.3 1425.4,875.3 1415.9,867.2 1411.8,854.9 1418.6,848.1 1409.0,846.7 1392.7,853.5 1379.1,859.0 1365.5,856.3 1351.9,859.0 1338.3,857.6 1323.3,861.7 1316.5,871.2 1311.1,883.5 1300.2,883.5 1289.3,880.8 1283.9,874.0 1267.5,872.6 1262.1,865.8 1256.7,854.9 1249.8,857.6 1244.4,864.4 1234.9,871.2 1226.7,868.5 1215.8,860.3 1210.4,854.9 1210.4,848.1 1202.2,845.4 1187.2,842.7 1185.9,830.4 1183.2,816.8 1187.2,803.2 1191.3,789.6" fill="#cdcdcd" stroke="#d8d8d8" stroke-width="0.8" stroke-linejoin="round"/><polyline points="1241.7,814.6 1240.3,833.1 1233.5,852.2 1232.2,863.1 1234.9,871.2" fill="none" stroke="#ececec" stroke-width="1" stroke-linejoin="round"/><polyline points="1452.6,773.2 1460.8,784.1 1458.1,800.5 1444.5,811.4 1430.9,816.8 1414.5,819.5 1409.0,830.4 1414.5,846.7" fill="none" stroke="#ececec" stroke-width="1" stroke-linejoin="round"/><polyline points="1411.8,845.4 1433.6,837.2 1447.2,835.9 1460.8,839.9 1488.0,849.5 1501.6,852.2 1531.8,849.5 1560.4,864.4" fill="none" stroke="#ececec" stroke-width="1" stroke-linejoin="round"/><polyline points="1458.1,839.9 1469.0,849.5 1474.4,868.5 1485.3,887.6 1477.1,886.2 1466.2,890.3 1460.8,901.2" fill="none" stroke="#ececec" stroke-width="1" stroke-linejoin="round"/><polyline points="1477.1,727.0 1490.8,722.9 1504.3,728.3 1520.9,728.3 1515.4,735.1 1515.4,748.8 1534.5,754.2 1535.9,765.1 1534.5,781.4 1542.7,795.0" fill="none" stroke="#ececec" stroke-width="1" stroke-linejoin="round"/><polyline points="1637.9,650.8 1654.3,656.2 1657.0,661.7 1661.1,678.0 1661.1,691.6 1651.5,694.3 1627.0,694.3 1618.9,699.8 1616.2,718.8 1629.8,729.7 1643.4,737.9 1640.6,756.9" fill="none" stroke="#ececec" stroke-width="1" stroke-linejoin="round"/><polyline points="1640.6,756.9 1659.7,761.0 1673.3,756.9 1695.1,747.4 1708.7,754.2 1727.8,765.1 1746.8,781.4 1763.1,789.6 1767.2,795.0" fill="none" stroke="#ececec" stroke-width="1" stroke-linejoin="round"/><polyline points="1640.6,756.9 1624.3,762.4 1605.3,776.0 1584.9,774.6 1565.8,763.7 1552.2,767.8 1550.8,781.4 1554.9,790.9 1542.7,795.0" fill="none" stroke="#ececec" stroke-width="1" stroke-linejoin="round"/><polyline points="1542.7,795.0 1539.9,797.7 1545.4,819.5 1561.7,819.5 1572.6,835.9 1567.2,849.5 1560.4,864.4" fill="none" stroke="#ececec" stroke-width="1" stroke-linejoin="round"/><polyline points="1560.4,864.4 1567.2,867.2 1591.7,849.5 1624.3,854.9 1659.7,850.8 1667.9,865.8 1670.6,895.7 1676.0,902.5" fill="none" stroke="#ececec" stroke-width="1" stroke-linejoin="round"/><polyline points="1793.1,765.1 1782.2,759.6 1779.5,748.8 1784.9,732.4 1801.2,724.3 1817.6,713.4 1836.7,707.9 1844.8,710.6" fill="none" stroke="#ececec" stroke-width="1" stroke-linejoin="round"/><polyline points="1767.2,795.0 1782.2,789.6 1784.9,770.5 1793.1,765.1" fill="none" stroke="#ececec" stroke-width="1" stroke-linejoin="round"/><polyline points="1767.2,795.0 1757.7,803.2 1763.1,833.1 1768.6,849.5 1760.4,868.5 1756.3,876.7" fill="none" stroke="#ececec" stroke-width="1" stroke-linejoin="round"/><polygon points="1768.6,688.9 1779.5,680.7 1787.6,678.0 1798.5,683.4 1801.2,699.8 1793.1,703.8 1779.5,702.5 1769.9,699.8" fill="#cdcdcd" stroke="#ececec" stroke-width="1"/><g stroke-linecap="round" fill="none"><path d="M1221 783 L1223.8 810" stroke="#f2f2f2" stroke-width="2.6"/><path d="M1219.4 783 L1223.2 792" stroke="#ececec" stroke-width="1.5"/><path d="M1220 781 L1219.5 761" stroke="#f0f0f0" stroke-width="1.6"/><path d="M1220 781 L1210.5 782.8" stroke="#f0f0f0" stroke-width="2"/><path d="M1220 781 L1228.8 778.4" stroke="#f6f6f6" stroke-width="3"/></g><rect x="1219" y="761" width="1.2" height="2" fill="#e08080"/><rect x="1209" y="782.2" width="1.5" height="1.2" fill="#e08080"/><g stroke-linecap="round" fill="none"><path d="M1663.5 785 L1666.3 813" stroke="#f2f2f2" stroke-width="2.6"/><path d="M1661.9 785 L1665.7 794" stroke="#ececec" stroke-width="1.5"/><path d="M1662.5 783 L1662.0 763" stroke="#f0f0f0" stroke-width="1.6"/><path d="M1662.5 783 L1653.0 784.8" stroke="#f0f0f0" stroke-width="2"/><path d="M1662.5 783 L1671.3 780.4" stroke="#f6f6f6" stroke-width="3"/></g><rect x="1661.5" y="763" width="1.2" height="2" fill="#e08080"/><rect x="1651.5" y="784.2" width="1.5" height="1.2" fill="#e08080"/><g stroke-linecap="round" fill="none"><path d="M1498.5 918 L1501.3 944.7" stroke="#f2f2f2" stroke-width="2.6"/><path d="M1496.9 918 L1500.7 927" stroke="#ececec" stroke-width="1.5"/><path d="M1497.5 916 L1497.0 896" stroke="#f0f0f0" stroke-width="1.6"/><path d="M1497.5 916 L1488.0 917.8" stroke="#f0f0f0" stroke-width="2"/><path d="M1497.5 916 L1506.3 913.4" stroke="#f6f6f6" stroke-width="3"/></g><rect x="1496.5" y="896" width="1.2" height="2" fill="#e08080"/><rect x="1486.5" y="917.2" width="1.5" height="1.2" fill="#e08080"/></svg>
<div class="t" style="left:1538.9px;top:690.0px;font-size:9px;font-weight:bold;color:#000;text-shadow:0 0 1px #fff,0 0 1px #fff">Oberösterreich</div>
<div class="t" style="left:1678.3px;top:701.7px;font-size:9px;font-weight:bold;color:#000;text-shadow:0 0 1px #fff,0 0 1px #fff">Niederösterreich</div>
<div class="t" style="left:1775.7px;top:688.7px;font-size:9px;font-weight:bold;color:#000;text-shadow:0 0 1px #fff,0 0 1px #fff">Wien</div>
<div class="t" style="left:1789.8px;top:735.5px;font-size:9px;font-weight:bold;color:#000;text-shadow:0 0 1px #fff,0 0 1px #fff">Burgenland</div>
<div class="t" style="left:1642.3px;top:793.5px;font-size:9px;font-weight:bold;color:#000;text-shadow:0 0 1px #fff,0 0 1px #fff">Turbine01</div>
<div class="t" style="left:1650.2px;top:813.3px;font-size:9px;font-weight:bold;color:#000;text-shadow:0 0 1px #fff,0 0 1px #fff">Steiermark</div>
<div class="t" style="left:1566.7px;top:885.2px;font-size:9px;font-weight:bold;color:#000;text-shadow:0 0 1px #fff,0 0 1px #fff">Kärnten</div>
<div class="t" style="left:1198.5px;top:789.4px;font-size:9px;font-weight:bold;color:#000;text-shadow:0 0 1px #fff,0 0 1px #fff">Turbine02</div>
<div class="t" style="left:1192.2px;top:818.5px;font-size:9px;font-weight:bold;color:#000;text-shadow:0 0 1px #fff,0 0 1px #fff">Vorarlberg</div>
<div class="t" style="left:1319.5px;top:824.2px;font-size:9px;font-weight:bold;color:#000;text-shadow:0 0 1px #fff,0 0 1px #fff">Tirol</div>
<div class="t" style="left:1480.7px;top:810.6px;font-size:9px;font-weight:bold;color:#000;text-shadow:0 0 1px #fff,0 0 1px #fff">Salzburg</div>
<div class="t" style="left:1486.1px;top:925.5px;font-size:9px;font-weight:bold;color:#000;text-shadow:0 0 1px #fff,0 0 1px #fff">Wind</div>
<div class="t" style="left:1165.5px;top:493.3px;font-size:12px;font-style:italic;color:#fff">World</div>
<div class="t" style="left:1203.5px;top:495.9px;font-size:10px;color:#fff">&gt;</div>
<div class="t" style="left:1218.3px;top:493.3px;font-size:12px;font-style:italic;color:#fff">Europe</div>
<div class="t" style="left:1263.8px;top:495.9px;font-size:10px;color:#fff">&gt;</div>
<div class="t" style="left:1278.8px;top:493.3px;font-size:12px;font-style:italic;font-weight:bold;color:#fff;text-decoration:underline">Austria</div>
<div class="a" style="left:1789.3px;top:495.3px;width:10px;height:10px;border-radius:2px;background:#fff"></div>
<svg style="left:1789px;top:495px" width="11" height="11"><path d="M2.3 5.2 L4.3 7.3 L8.3 2.8" fill="none" stroke="#222" stroke-width="1.7"/></svg>
<div class="t" style="left:1804.7px;top:494.3px;font-size:12px;color:#fff">Show labels</div>
<div class="a" style="left:1182.8px;top:967.5px;width:23.5px;height:46px;border-radius:2.5px;background:#fff"></div>
<div class="a" style="left:1182.8px;top:990px;width:23.5px;height:0.8px;background:#ccc"></div>
<svg style="left:1182px;top:967px" width="25" height="48"><path d="M12.5 7 V16 M8 11.5 H17" stroke="#555" stroke-width="2.3" stroke-linecap="round"/><path d="M8 34.3 H17" stroke="#555" stroke-width="2.3" stroke-linecap="round"/></svg>
<div class="a" style="left:239px;top:619px;width:902px;height:409.5px;overflow:hidden;background:#eeede4">
<svg style="left:0;top:0" width="902" height="410" viewBox="239 619 902 410">
<defs>
<filter id="tex" x="0" y="0" width="100%" height="100%"><feTurbulence type="fractalNoise" baseFrequency="0.05" numOctaves="4" seed="7"/>
<feColorMatrix type="matrix" values="0 0 0 0 0.80  0 0 0 0 0.89  0 0 0 0 0.74  0 0 0 7 -3.0"/></filter>
<filter id="tex2" x="0" y="0" width="100%" height="100%"><feTurbulence type="fractalNoise" baseFrequency="0.16" numOctaves="3" seed="3"/>
<feColorMatrix type="matrix" values="0 0 0 0 0.74  0 0 0 0 0.86  0 0 0 0 0.66  0 0 0 8 -3.9"/></filter>
<filter id="tex3" x="0" y="0" width="100%" height="100%"><feTurbulence type="fractalNoise" baseFrequency="0.11" numOctaves="2" seed="11"/><feColorMatrix type="matrix" values="0 0 0 0 0.79  0 0 0 0 0.88  0 0 0 0 0.72  0 0 0 6 -3.1"/></filter>
<radialGradient id="grn"><stop offset="0" stop-color="#bcd9a4" stop-opacity="0.55"/><stop offset="0.6" stop-color="#bcd9a4" stop-opacity="0.35"/><stop offset="1" stop-color="#bcd9a4" stop-opacity="0"/></radialGradient>
<radialGradient id="pale"><stop offset="0" stop-color="#f2efe8" stop-opacity="0.85"/><stop offset="1" stop-color="#f2efe8" stop-opacity="0"/></radialGradient>
</defs>
<rect x="239" y="619" width="902" height="410" fill="#f0eee6" filter="url(#tex)"/>
<rect x="239" y="619" width="902" height="410" filter="url(#tex2)" opacity="0.7"/>
<ellipse cx="340" cy="700" rx="60" ry="70" fill="url(#grn)"/>
<ellipse cx="470" cy="690" rx="50" ry="35" fill="url(#grn)"/>
<ellipse cx="600" cy="840" rx="180" ry="55" fill="url(#grn)"/>
<ellipse cx="760" cy="855" rx="90" ry="45" fill="url(#grn)"/>
<ellipse cx="830" cy="960" rx="90" ry="50" fill="url(#grn)"/>
<ellipse cx="725" cy="650" rx="45" ry="35" fill="url(#grn)"/>
<ellipse cx="1070" cy="660" rx="80" ry="45" fill="url(#grn)"/>
<ellipse cx="930" cy="810" rx="35" ry="25" fill="url(#grn)"/>
<ellipse cx="285" cy="830" rx="40" ry="60" fill="url(#grn)"/>
<ellipse cx="560" cy="1020" rx="70" ry="20" fill="url(#grn)"/>
<ellipse cx="420" cy="870" rx="60" ry="40" fill="url(#grn)"/>
<ellipse cx="880" cy="640" rx="40" ry="25" fill="url(#grn)"/>
<rect x="239" y="619" width="902" height="410" fill="#f0eee6" filter="url(#tex3)" opacity="0.9"/>
<ellipse cx="990" cy="740" rx="70" ry="35" fill="url(#pale)"/>
<ellipse cx="960" cy="790" rx="60" ry="30" fill="url(#pale)"/>
<ellipse cx="470" cy="1000" rx="170" ry="40" fill="url(#pale)"/>
<ellipse cx="600" cy="990" rx="90" ry="40" fill="url(#pale)"/>
<ellipse cx="1000" cy="880" rx="110" ry="60" fill="url(#pale)"/>
<ellipse cx="1090" cy="840" rx="60" ry="70" fill="url(#pale)"/>
<ellipse cx="1000" cy="990" rx="120" ry="40" fill="url(#pale)"/>
<ellipse cx="890" cy="730" rx="60" ry="40" fill="url(#pale)"/>
<ellipse cx="560" cy="720" rx="50" ry="30" fill="url(#pale)"/>
<g fill="none" stroke="#e7a3ab" stroke-width="0.9" stroke-opacity="0.75" stroke-linejoin="round"><polyline points="815.8,629.3 818.3,638.3 818.1,654.0 817.1,662.3 821.1,672.9"/><polyline points="782.0,849.1 780.3,838.2 779.2,818.9 767.7,803.4 762.6,791.7 747.0,777.1 739.1,772.2 719.2,770.8 700.3,767.1"/><polyline points="897.2,838.9 906.7,831.3 924.4,821.2 932.6,814.4 938.9,798.3 952.8,781.6 971.0,772.8"/><polyline points="581.9,804.9 585.9,794.7 587.8,773.7 592.2,757.8 590.0,739.7"/><polyline points="386.4,774.6 397.3,776.3 416.1,775.4 432.3,764.6 445.6,761.7 461.0,747.7 475.3,736.7 483.3,724.0 497.9,715.3"/><polyline points="367.9,676.2 362.8,660.9 365.0,647.5 361.2,625.8 359.7,616.7 353.5,609.4 343.4,593.2 338.0,586.1"/><polyline points="583.2,1027.4 576.6,1022.7 565.4,1009.2 558.3,999.8 553.9,991.3 546.4,979.1 546.2,958.8 541.8,944.5"/><polyline points="400.1,993.2 414.0,987.2 423.6,978.1 431.9,958.4 448.3,945.6 461.0,937.9"/><polyline points="339.9,767.8 350.4,763.3 359.0,760.4 378.4,759.6 391.7,767.3 408.9,768.7"/><polyline points="1093.1,686.7 1082.1,685.8 1064.1,683.5 1052.0,686.3 1036.0,680.2 1021.4,675.8 1010.4,677.7 995.2,683.4"/><polyline points="446.6,709.3 455.5,708.5 465.6,700.9 475.2,694.0 487.6,684.6 506.5,677.1 517.5,673.9 530.5,669.6 542.4,657.1"/><polyline points="558.6,787.6 575.9,774.4 581.8,762.1 586.7,742.6"/><polyline points="463.3,697.0 452.2,706.3 443.5,708.6 423.6,706.3 407.6,712.4 399.8,715.0 387.0,728.4"/><polyline points="452.2,785.6 442.6,781.9 429.5,785.0 411.2,779.8 393.5,779.4 375.4,773.8 362.3,766.8"/><polyline points="410.3,708.3 427.2,715.8 443.2,713.9 463.1,711.7 481.7,701.1 487.2,692.0 497.9,678.2 501.1,669.1 509.4,661.2"/><polyline points="775.3,872.9 764.0,878.1 750.8,889.5 743.9,899.0 740.7,915.7 737.9,936.5 732.9,943.0 721.4,954.0"/><polyline points="329.2,839.4 311.9,828.7 304.9,817.5 288.7,806.4 277.7,794.0"/><polyline points="1129.5,887.1 1146.5,883.8 1155.8,887.1 1165.2,885.9 1177.0,885.2 1195.0,886.3 1211.2,881.4 1223.6,873.4"/><polyline points="1055.6,965.9 1060.4,973.0 1067.5,979.9 1069.7,989.9 1074.8,1007.1 1076.9,1016.4 1071.3,1033.2"/><polyline points="373.4,633.8 370.3,643.0 368.3,663.5 359.6,681.6 350.8,688.1 345.2,695.7 328.5,707.3 315.9,718.3"/><polyline points="378.4,1000.3 386.1,997.1 398.7,995.7 416.3,1003.3 429.2,1017.8"/><polyline points="479.7,941.8 484.6,951.8 485.8,966.2 491.7,984.4"/><polyline points="444.3,628.7 449.5,636.0 453.3,648.3 458.2,665.2 456.6,677.7 465.2,696.1"/><polyline points="474.6,857.0 486.4,849.4 498.3,845.8 513.2,843.2"/><polyline points="586.4,855.4 587.2,870.7 581.6,887.4 567.9,899.5 561.3,911.9 543.5,922.8 527.5,929.5 513.9,944.9 502.4,957.9"/><polyline points="533.2,904.9 512.7,899.7 494.2,890.5 484.1,883.7 477.7,878.8"/><polyline points="497.8,795.3 484.2,791.2 470.9,783.9 456.8,767.8 449.5,752.2 438.5,738.9 433.6,731.0 433.5,719.7 429.0,700.9"/><polyline points="371.9,637.9 380.5,640.8 396.9,644.4 414.5,641.7 425.7,639.9 433.8,640.2 451.6,646.3 465.4,644.3"/><polyline points="397.6,1011.8 377.1,1008.0 367.6,1010.7 353.0,1015.4"/><polyline points="743.2,749.1 746.2,731.3 749.6,711.9 754.3,691.9 761.6,679.2 764.3,668.1 771.6,650.9"/><polyline points="709.2,876.0 704.7,886.3 700.4,906.3 703.2,916.0"/><polyline points="584.5,681.7 589.7,696.4 594.3,706.2 604.8,724.0 612.3,740.1 612.4,758.8 613.6,766.8"/><polyline points="556.3,927.9 568.0,913.9 585.9,903.8 596.1,897.8 607.6,890.8 625.6,884.3 645.4,882.9"/><polyline points="1068.4,1021.1 1052.0,1015.6 1038.3,1018.0 1028.1,1015.2 1015.5,1015.5 1002.8,1016.5 991.8,1012.1"/><polyline points="1097.0,791.8 1096.3,776.3 1103.1,765.4 1115.9,751.3 1130.6,740.1 1141.3,738.9 1149.2,732.4"/><polyline points="352.9,893.5 342.0,889.4 325.9,886.1 312.8,873.7 308.0,864.5"/><polyline points="519.6,856.3 540.4,851.3 557.3,845.0 568.7,831.5 575.8,825.3 594.2,817.8 603.6,815.3 621.6,821.1"/><polyline points="552.2,794.6 545.6,799.5 534.5,809.4 525.6,818.9 512.0,823.8 504.4,831.0 491.6,842.4 474.3,854.1"/><polyline points="937.7,809.6 941.6,790.1 946.8,782.4 956.7,776.8 970.7,768.0 977.1,762.5 987.3,759.6 1002.7,748.3"/><polyline points="546.0,979.9 542.4,965.1 535.8,955.8 525.4,944.0 512.8,936.5 502.8,926.3"/><polyline points="254.6,739.6 243.7,751.6 233.7,763.3 223.0,778.4 215.9,794.7"/><polyline points="483.4,722.1 499.2,731.5 507.5,747.0 521.5,759.0 536.2,765.9"/><polyline points="924.7,863.7 936.9,859.0 951.6,848.8 955.9,841.3 955.7,829.2"/><polyline points="1090.6,880.5 1097.8,866.2 1103.6,853.3 1104.1,844.6"/><polyline points="1087.8,814.9 1094.7,800.3 1101.0,792.4 1119.4,781.6 1125.3,771.8 1133.2,760.5 1144.3,748.0"/><polyline points="938.7,775.0 960.3,771.8 975.8,765.7 993.7,761.3 1004.1,764.4 1021.3,763.5"/><polyline points="380.7,690.3 397.2,696.5 405.2,699.2 417.1,700.1"/><polyline points="1014.4,648.2 1010.4,664.4 1001.5,683.6 996.2,698.3 985.9,716.2 978.8,721.7"/><polyline points="388.7,745.1 395.4,732.7 400.9,721.7 404.9,710.6 410.3,697.5 420.3,679.7 432.0,668.1 434.4,657.2"/><polyline points="847.2,971.8 840.1,955.9 834.5,949.4 828.9,935.9"/><polyline points="826.7,994.6 836.1,1011.5 835.3,1026.1 836.0,1038.6 841.1,1047.4 850.0,1059.5 855.8,1071.8 856.9,1080.2"/><polyline points="318.4,722.5 326.1,740.5 343.1,751.3 350.7,755.7 365.0,764.3 377.2,771.6 388.9,771.7"/><polyline points="357.2,737.1 365.0,716.9 370.4,706.9 371.8,691.3 373.2,682.1 387.2,666.8 393.4,659.4"/><polyline points="989.6,823.3 990.1,809.5 990.3,794.9 990.0,784.9 983.5,769.8 982.4,760.0 971.3,744.8 968.7,732.3"/><polyline points="949.5,728.5 965.3,724.9 979.2,730.3 994.7,729.6 1010.0,725.9 1024.1,723.3 1033.9,719.2 1049.7,716.7 1066.5,708.0"/><polyline points="278.4,924.3 271.4,908.5 270.6,886.8 270.3,878.3 269.7,862.0 277.7,843.5 282.8,829.0"/><polyline points="651.1,915.2 642.1,915.2 631.0,911.4 619.0,905.0 606.4,905.3 591.2,902.4 578.8,891.1 573.4,877.3 568.2,861.5"/><polyline points="450.8,899.6 443.6,911.7 442.8,928.6 436.0,941.1 422.3,956.5"/><polyline points="280.5,945.4 278.3,956.6 276.9,974.1 280.0,984.1 282.2,997.3 281.4,1012.2"/><polyline points="765.0,714.2 758.2,709.8 746.0,693.2 741.8,683.8 735.8,672.5 729.5,656.8 724.2,646.6"/><polyline points="1001.5,700.7 996.6,713.1 994.1,725.0 990.5,732.5 980.5,741.5 975.5,761.0 963.6,779.1"/><polyline points="1060.4,924.5 1068.8,917.1 1079.2,913.3 1087.8,905.6 1104.9,897.9 1114.6,895.9"/><polyline points="326.6,876.3 339.1,872.2 354.2,858.0 362.1,846.7 366.8,828.3 375.3,818.2 382.9,809.2"/><polyline points="387.4,993.8 400.1,993.1 418.8,982.5 431.4,965.0 447.2,956.0 468.7,957.3"/><polyline points="964.7,769.0 964.5,759.2 961.1,741.1 955.0,729.2"/><polyline points="815.0,771.3 797.4,761.0 780.2,749.2 771.7,746.9 755.2,734.2 742.7,728.6 721.5,728.9"/><polyline points="513.5,821.0 527.7,823.5 544.8,830.2 553.3,841.2 556.9,850.7 561.1,859.1 567.5,871.2 567.0,879.7"/><polyline points="573.2,800.8 585.6,788.3 601.6,773.7 610.0,763.0 612.8,753.7 622.1,742.8"/><polyline points="836.8,882.1 824.2,881.2 809.1,869.6 790.4,863.7"/><polyline points="738.9,859.4 740.8,849.5 745.8,843.2 754.7,838.7 761.8,829.6"/><polyline points="396.4,890.0 415.4,889.9 423.6,890.7 433.2,888.9"/><polyline points="618.7,665.6 630.0,675.8 644.5,679.7 650.5,685.8 659.0,704.1 664.7,717.4 663.4,726.1"/><polyline points="671.0,783.7 669.0,769.6 673.0,757.8 672.2,748.1 673.1,731.9 677.3,719.2 682.3,708.2"/><polyline points="695.0,795.4 706.0,782.2 721.3,772.7 730.3,761.5"/><polyline points="445.1,758.0 432.7,758.2 421.5,760.9 404.7,755.7 395.7,753.2 382.1,756.3 368.9,755.4"/><polyline points="356.4,643.6 365.0,639.1 378.7,628.6 397.7,621.7 419.1,619.8 432.1,620.2 442.9,621.6 453.5,625.1"/><polyline points="336.6,965.6 322.4,978.7 301.9,985.7 285.4,984.8 277.2,982.9 262.7,969.7"/><polyline points="480.2,693.0 482.9,680.3 481.2,670.5 481.3,661.5 487.8,640.9 484.9,625.7"/><polyline points="578.3,805.0 584.2,822.9 586.3,831.9 593.4,839.2 603.7,853.3 617.3,864.0"/><polyline points="677.1,800.2 681.4,813.6 691.0,828.2 700.7,842.6 713.0,848.2 719.9,852.5 730.3,855.8 741.8,854.4"/><polyline points="535.0,622.2 528.1,608.3 516.8,597.2 509.7,586.4 497.7,572.4"/><polyline points="632.5,807.5 645.9,816.3 655.2,826.5 662.9,829.5 681.9,832.6 700.7,838.4"/><polyline points="1068.6,655.1 1075.4,643.3 1075.6,623.1 1078.9,612.5 1084.3,605.3"/><polyline points="810.2,836.5 821.0,855.0 824.5,864.4 833.1,872.2 842.6,875.7 849.8,881.2"/><polyline points="1097.1,876.5 1082.8,875.2 1069.7,866.3 1057.5,854.8 1051.3,839.2 1044.9,833.0 1035.6,825.0 1027.6,821.3"/><polyline points="696.6,746.3 685.8,751.6 665.0,757.7 653.4,769.2"/><polyline points="585.8,856.9 599.8,859.6 614.4,868.7 628.2,873.6 637.0,873.0 654.6,862.2 667.9,850.1 675.6,843.2 682.8,831.0"/><polyline points="635.4,833.3 636.3,846.7 631.9,863.6 636.5,879.8 642.3,891.0 647.6,903.3"/><polyline points="466.3,968.1 478.6,971.0 488.1,974.1 509.4,977.2 522.0,982.2 540.5,992.3 553.3,995.8 569.2,1007.0"/><polyline points="843.4,958.9 847.3,950.4 856.2,938.2 856.8,925.9 863.9,915.2 872.4,908.7 882.5,908.1 900.7,902.4 915.6,897.9"/><polyline points="905.3,834.9 894.1,827.7 874.8,824.4 857.7,815.2 843.7,813.9 826.2,814.1 812.8,818.7 797.4,828.9"/><polyline points="643.9,837.9 635.8,844.9 621.8,852.6 606.0,862.7 591.4,866.2 581.6,869.6 569.0,880.1"/><polyline points="1026.4,640.4 1017.0,640.9 998.4,633.9 979.8,632.1 959.4,635.6 947.7,643.5"/><polyline points="1092.7,710.0 1079.2,707.2 1066.0,706.0 1056.8,706.5 1045.3,711.2 1033.6,724.8"/><polyline points="541.4,678.9 550.3,683.4 561.0,692.9 570.0,694.1 589.4,690.8 607.5,688.9 617.1,688.2"/><polyline points="498.9,742.5 513.8,750.0 533.5,748.9 549.0,748.0 564.9,749.6 576.2,753.8 588.8,750.8"/><polyline points="753.7,695.8 754.2,686.9 755.5,671.8 765.4,659.5 772.9,647.0 787.0,630.4 790.2,622.9 799.0,613.5"/><polyline points="900.1,876.6 904.3,867.7 907.7,855.4 916.0,837.6 929.3,820.4 935.5,811.9 939.0,794.2 944.7,787.9 951.6,770.1"/><polyline points="1038.0,748.4 1025.2,757.3 1013.7,771.8 1009.9,784.3 997.9,800.5 993.8,809.3 988.3,829.0"/><polyline points="909.5,985.8 898.2,995.6 883.2,998.8 865.3,996.0 849.8,1001.7"/><polyline points="980.8,842.6 977.9,854.4 974.7,872.2 977.9,886.1"/><polyline points="642.3,917.0 654.1,917.5 671.5,929.8 688.3,931.7 707.5,930.6 728.6,934.0 744.5,929.6 752.9,930.2"/><polyline points="299.6,938.2 291.6,940.7 280.8,950.1 271.6,961.0 269.7,970.7 269.3,983.1 274.3,1004.0"/><polyline points="262.4,695.3 244.6,701.7 233.7,702.8 216.0,702.3 207.3,695.9 198.4,694.2 180.8,697.7 162.9,690.2"/><polyline points="1111.7,1023.5 1098.3,1015.6 1087.6,998.8 1081.1,978.8 1078.2,959.9 1076.9,950.3 1072.2,941.6 1070.9,933.3 1069.8,920.2"/><polyline points="963.9,845.2 950.6,842.7 937.3,836.4 924.3,831.9"/><polyline points="757.6,670.4 751.4,686.8 747.8,706.8 739.6,721.6"/><polyline points="403.1,1015.2 387.9,1015.6 378.0,1018.2 367.2,1015.3"/><polyline points="1093.6,831.7 1095.1,848.6 1095.3,858.3 1099.3,873.3"/><polyline points="692.3,688.1 704.4,676.6 716.7,673.1 725.0,675.0 732.2,680.7"/><polyline points="1094.6,935.1 1089.0,947.8 1080.8,960.3 1072.8,969.3 1058.7,973.5"/><polyline points="964.8,899.8 959.7,908.7 953.8,921.9 951.5,931.7"/><polyline points="1016.1,749.9 1024.7,754.6 1039.7,759.9 1054.1,761.7 1065.4,759.9 1075.1,752.7"/><polyline points="585.5,871.3 578.0,891.0 571.7,899.6 566.9,921.0 563.2,941.0"/><polyline points="687.6,655.9 676.7,657.1 668.3,659.6 648.8,665.5 634.3,667.1 614.5,668.3 594.4,671.3"/><polyline points="895.2,932.2 892.2,947.8 891.9,959.8 893.5,974.0 894.5,993.5 892.9,1010.0 896.1,1018.8"/><polyline points="575.6,1023.6 567.2,1016.9 555.5,1007.5 545.7,1006.1 531.1,1007.1 514.7,1009.0"/><polyline points="704.0,753.5 690.1,744.3 681.2,730.7 673.0,717.9 664.3,704.6"/><polyline points="667.4,625.8 653.0,633.4 635.0,635.7 626.7,634.9"/><polyline points="945.2,937.2 930.5,938.0 912.4,938.4 899.7,934.3 890.9,927.0 878.3,914.5 865.3,908.8 852.2,904.6 837.2,905.3"/><polyline points="790.6,812.4 791.5,802.5 788.3,790.3 787.3,775.0 784.3,765.0 787.0,752.5 787.6,733.7 792.6,717.4 800.9,703.2"/><polyline points="412.4,720.1 398.8,703.1 392.7,686.3 390.9,671.6 388.5,655.9"/><polyline points="1081.9,914.9 1076.1,926.9 1059.5,937.0 1040.2,937.0 1028.6,939.9 1015.7,939.9 1004.2,940.6 993.4,941.6"/><polyline points="866.9,675.3 859.0,671.8 852.0,663.0 844.2,657.9 830.6,652.5 822.3,647.0 813.5,627.2 800.8,615.6"/><polyline points="1033.3,814.0 1020.7,802.7 1017.5,794.0 1013.5,779.0 1013.6,757.9 1018.7,748.7"/><polyline points="1034.8,691.1 1045.3,689.4 1065.3,692.2 1073.7,691.2 1089.2,685.5 1101.7,687.5 1118.6,689.3"/><polyline points="360.0,825.7 361.1,843.9 359.0,861.9 364.7,873.2"/><polyline points="505.1,895.5 503.7,916.0 496.9,929.6 497.5,947.0 501.4,956.1 508.1,965.4 517.1,972.4 529.2,989.9"/><polyline points="511.4,915.4 522.6,914.3 537.0,915.8 553.8,910.5 573.9,914.7 589.1,923.6 605.4,937.1 614.9,942.8 621.8,955.8"/><polyline points="576.0,906.8 595.2,903.2 612.6,905.4 631.1,910.0 645.9,914.2 666.6,916.5 685.0,909.6 695.7,911.0"/><polyline points="723.1,686.5 725.2,675.8 727.9,666.9 733.7,648.5 737.5,633.8 739.3,625.2 742.3,606.1"/><polyline points="891.4,781.3 892.1,772.3 891.9,754.5 892.2,745.7 902.9,726.7 908.4,716.0 909.3,706.1 914.0,688.5 923.7,679.5"/><polyline points="1043.0,802.9 1056.7,792.0 1070.6,784.9 1082.9,781.2 1095.0,771.4 1109.5,760.5 1114.1,753.9"/><polyline points="259.5,741.3 252.3,730.1 241.0,721.1 230.7,718.4 216.6,706.2 199.5,703.6 179.3,697.6 171.0,689.8"/><polyline points="299.7,862.5 291.1,863.3 277.7,860.7 266.7,862.0 258.4,859.3 246.9,855.5 232.9,843.8 218.4,836.3 208.8,828.3"/><polyline points="511.2,677.7 503.9,668.4 494.7,655.0 491.4,645.1 489.8,629.4"/><polyline points="281.3,760.2 277.3,748.4 273.1,739.2 263.0,723.7 251.6,707.3 238.2,695.5 228.6,677.0"/><polyline points="741.7,674.0 743.9,682.8 747.9,695.4 753.1,714.3 762.6,723.5"/><polyline points="784.7,635.2 796.5,645.7 811.9,658.7 830.7,669.0 851.7,667.3 860.3,671.7 867.3,684.7 879.2,696.1"/><polyline points="423.5,994.2 408.3,991.4 396.6,991.2 381.6,990.7 362.1,1000.2 344.6,1009.5"/><polyline points="1063.7,771.0 1045.4,772.9 1033.2,782.9 1018.2,792.8 1010.9,800.7 1004.4,815.3 1002.7,831.0 995.0,841.1"/><polyline points="927.6,819.3 925.7,809.1 927.5,798.9 933.9,785.5 946.5,776.3 954.4,772.4 964.8,755.5 980.2,747.4 993.7,745.1"/><polyline points="999.0,713.9 990.8,702.1 975.4,694.9 963.5,677.9"/><polyline points="833.7,625.5 819.4,631.2 802.2,644.4 795.7,662.7 785.7,679.2 777.5,684.0 772.2,692.6"/><polyline points="412.1,834.8 418.4,828.3 432.4,824.6 447.4,815.1 461.0,801.0 466.7,779.9"/><polyline points="825.2,632.0 817.6,636.4 813.1,645.8 807.0,658.5 795.7,669.7 786.9,672.9 778.7,675.5"/><polyline points="429.7,974.9 441.3,957.5 450.0,949.3 463.1,938.1 472.2,920.4 471.1,909.6 461.2,892.8"/><polyline points="979.5,999.8 979.5,1019.5 982.3,1039.9 988.4,1057.4 1003.6,1073.1 1010.8,1086.3 1010.2,1095.0 1010.3,1114.8"/><polyline points="546.2,934.3 558.3,937.8 575.5,945.8 585.9,950.0 597.8,955.7 614.0,956.8 632.7,955.3"/><polyline points="505.4,720.0 523.4,720.9 541.3,724.7 550.8,724.6 560.9,717.5 569.4,709.3"/><polyline points="358.5,695.8 349.5,698.7 338.5,710.0 323.8,721.9 315.9,723.9 298.1,730.4 282.3,731.7 272.4,726.1"/><polyline points="709.0,900.0 719.1,910.9 732.6,915.1 747.0,918.2 758.1,914.8 771.8,905.3"/><polyline points="774.6,699.2 788.1,700.3 799.9,706.5 808.4,717.8 821.4,732.4 829.9,746.3"/><polyline points="510.0,866.3 498.4,848.2 498.4,836.1 501.8,821.6 505.4,810.8 508.7,791.7 509.1,782.1"/><polyline points="747.6,861.8 740.7,857.0 727.2,840.7 710.7,831.0 705.3,823.8 701.1,805.1 700.9,795.2 698.0,784.0 689.4,773.1"/><polyline points="579.0,803.1 565.8,795.9 556.2,781.0 546.8,764.5 533.8,748.6 523.6,735.0 506.6,727.2 496.0,719.6"/><polyline points="822.6,637.2 844.1,638.7 863.1,636.3 870.8,631.0 881.7,616.1 893.2,602.7 898.0,590.3 903.6,573.7 908.9,565.2"/><polyline points="1138.9,816.9 1142.6,837.8 1149.7,848.0 1156.3,856.6"/><polyline points="674.6,814.2 666.5,818.1 656.7,833.1 656.6,845.9 665.2,863.1 664.2,881.4 663.1,897.1 664.9,911.0 668.3,929.8"/><polyline points="807.0,695.4 791.9,688.6 775.7,687.6 757.8,688.9 741.0,696.6 732.1,697.1 714.7,707.4"/><polyline points="407.6,752.7 392.8,753.6 381.9,747.7 369.3,742.9 356.4,744.1 346.1,745.7"/><polyline points="846.6,947.3 851.8,938.9 853.1,926.7 848.2,909.7 844.6,896.3 836.0,886.0 821.2,878.0 808.4,866.7"/><polyline points="1140.9,846.5 1123.0,855.0 1103.8,860.8 1089.4,857.3 1076.2,858.9"/><polyline points="745.5,886.8 730.1,899.1 723.0,904.9 717.1,922.6 716.2,934.4 715.0,944.7 713.8,963.0"/><polyline points="929.9,844.4 944.0,850.9 952.2,864.2 956.6,882.3"/></g>
<polyline points="355.0,645.0 380.0,680.0 420.0,710.0 470.0,735.0 510.0,760.0 550.0,745.0 575.0,735.0 620.0,745.0 660.0,760.0 700.0,770.0 760.0,740.0 800.0,720.0 860.0,705.0 875.0,706.0" fill="none" stroke="#e9a0a8" stroke-width="1.3"/>
<polyline points="410.0,652.0 470.0,690.0 505.0,705.0 540.0,712.0 580.0,725.0" fill="none" stroke="#e9a0a8" stroke-width="1.3"/>
<polyline points="505.0,655.0 545.0,690.0 580.0,728.0" fill="none" stroke="#e9a0a8" stroke-width="1.3"/>
<polyline points="335.0,760.0 380.0,790.0 410.0,805.0 460.0,825.0 515.0,836.0" fill="none" stroke="#e9a0a8" stroke-width="1.3"/>
<polyline points="260.0,900.0 300.0,880.0 345.0,855.0 380.0,850.0 420.0,860.0" fill="none" stroke="#e9a0a8" stroke-width="1.3"/>
<polyline points="390.0,930.0 430.0,945.0 480.0,970.0 520.0,975.0 560.0,960.0 600.0,958.0 650.0,955.0 695.0,945.0" fill="none" stroke="#e9a0a8" stroke-width="1.3"/>
<polyline points="440.0,985.0 480.0,990.0 530.0,980.0 560.0,990.0" fill="none" stroke="#e9a0a8" stroke-width="1.3"/>
<polyline points="690.0,945.0 720.0,920.0 760.0,905.0 800.0,880.0 830.0,855.0 860.0,840.0 880.0,810.0 900.0,770.0 880.0,720.0" fill="none" stroke="#e9a0a8" stroke-width="1.3"/>
<polyline points="875.0,708.0 920.0,715.0 960.0,745.0 1010.0,770.0 1050.0,755.0 1090.0,745.0 1140.0,730.0" fill="none" stroke="#e9a0a8" stroke-width="1.3"/>
<polyline points="830.0,905.0 870.0,905.0 910.0,880.0 960.0,865.0 1010.0,860.0 1040.0,870.0 1080.0,880.0 1120.0,890.0" fill="none" stroke="#e9a0a8" stroke-width="1.3"/>
<polyline points="1040.0,775.0 1050.0,810.0 1060.0,840.0 1090.0,880.0 1110.0,920.0" fill="none" stroke="#e9a0a8" stroke-width="1.3"/>
<polyline points="830.0,905.0 880.0,950.0 940.0,975.0 1000.0,1000.0 1060.0,1010.0" fill="none" stroke="#e9a0a8" stroke-width="1.3"/>
<polyline points="760.0,940.0 790.0,960.0 810.0,990.0 830.0,1029.0" fill="none" stroke="#e9a0a8" stroke-width="1.3"/>
<polyline points="560.0,870.0 580.0,900.0 600.0,940.0 610.0,960.0" fill="none" stroke="#e9a0a8" stroke-width="1.3"/>
<polyline points="460.0,1029.0 480.0,1010.0 500.0,990.0" fill="none" stroke="#e9a0a8" stroke-width="1.3"/>
<polyline points="930.0,620.0 940.0,660.0 930.0,700.0" fill="none" stroke="#e9a0a8" stroke-width="1.3"/>
<polyline points="1000.0,640.0 1060.0,660.0 1120.0,650.0" fill="none" stroke="#e9a0a8" stroke-width="1.3"/>
<polyline points="240.0,700.0 270.0,720.0 300.0,760.0 330.0,775.0" fill="none" stroke="#e9a0a8" stroke-width="1.3"/>
<polyline points="560.0,760.0 580.0,790.0 610.0,810.0 650.0,830.0 700.0,840.0 740.0,835.0 790.0,830.0 830.0,840.0" fill="none" stroke="#e9a0a8" stroke-width="1.3"/>
<polygon points="622.0,1029.0 623.0,1010.0 624.0,986.0 624.9,971.8 628.7,957.4 640.2,953.6 653.6,946.0 667.0,942.1 674.6,938.3 676.6,932.5 686.1,930.6 693.8,938.3 699.5,933.5 701.4,928.7 710.0,931.6 714.8,938.3 710.0,943.1 700.5,957.4 701.4,971.8 707.2,986.1 714.8,1000.5 722.5,1010.0 727.3,1012.9 732.0,1005.3 738.8,995.7 743.5,989.0 749.3,972.7 757.0,968.9 764.6,972.7 777.0,988.0 784.7,991.9 786.6,1005.3 787.6,1029.0" fill="#aad3df"/>
<path d="M650 1029 L655 1000 L660 975 L672 962 L680 960 L682 985 L690 1029" fill="none" stroke="#a593b2" stroke-width="2"/>
<path d="M758 1029 L762 1010 L772 995" fill="none" stroke="#a593b2" stroke-width="1.5"/>
<path d="M432.3 755.7 L446.9 759.4 L461.5 765.6 L468.8 771.1 L461.5 771.1 L446.9 765.6 L434.1 760.1Z" fill="#aad3df"/>
<path d="M927.6 845.3 Q940 838 952.3 834.5 Q968 828 983.2 819 L982 826 Q968 834 952.3 839.1 Q940 843 929 848Z" fill="#aad3df"/>
<path d="M242.6 874 Q250 862 271.8 858.6 Q287 860 297.3 873.2 L290 876.9 Q272 870 253.5 876.9Z" fill="#aad3df"/>
<path d="M895.6 738.2 L906.6 741 L905 752.8 L897 750Z" fill="#aad3df"/>
<path d="M284.5 827.6 L302.8 834 L301 837.5 L283 830Z" fill="#aad3df"/>
<path d="M567 913 L573 915 L579 946 L570 946 L565 930Z" fill="#aad3df"/>
<path d="M520 880 L524 880 L531 906 L527 906Z" fill="#aad3df"/>
<path d="M505 866 L509 866 L512 900 L507 900Z" fill="#aad3df"/>
<polyline points="338.5,619.0 350.6,646.0 347.6,679.0 338.5,718.5 335.5,745.7 334.6,766.0 356.6,767.5 386.0,760.0 397.8,747.0 412.5,758.7 422.8,758.7 440.0,759.6 466.9,772.0 491.7,767.9 510.3,767.9 533.0,776.2 547.5,784.4 572.3,780.3 597.2,767.9 617.8,763.7 622.0,753.4 636.4,755.5 646.8,763.7 657.1,770.0 667.5,776.2 663.3,759.6 661.3,743.0 655.0,734.8 653.0,718.3 667.5,705.8 688.1,691.4 694.3,679.0 715.0,668.6 719.2,652.1 708.8,635.5 688.1,619.0" fill="none" stroke="#a58fae" stroke-width="2.6" stroke-opacity="0.85" stroke-linejoin="round"/>
<polyline points="715.0,668.6 739.8,674.8 762.6,672.8 779.1,660.4 791.5,637.6 812.2,639.7 845.3,650.0 874.2,658.3 890.0,655.8 909.1,663.0 922.4,648.4 945.9,652.8 966.5,639.6 981.2,619.0" fill="none" stroke="#a58fae" stroke-width="2.6" stroke-opacity="0.85" stroke-linejoin="round"/>
<polyline points="909.1,663.0 912.0,690.0 912.0,714.6 918.0,722.0 909.0,740.0 918.0,756.0 898.8,757.2 890.0,766.0 882.5,770.0 892.9,774.1 884.6,798.9 880.4,815.4 863.9,838.2 853.6,846.5 822.5,848.5 791.5,850.6 770.9,871.3 739.8,871.3 708.8,863.0 677.8,856.8 646.8,848.5 626.1,838.2 615.8,821.6 619.9,811.3 597.2,817.5 564.1,823.7 551.7,829.9 537.2,838.2 518.6,832.0 510.3,821.6 502.0,817.5 479.3,813.4 454.5,811.3 456.5,788.6 464.8,778.2 466.9,772.0" fill="none" stroke="#a58fae" stroke-width="2.6" stroke-opacity="0.85" stroke-linejoin="round"/>
<polyline points="918.0,722.0 941.5,744.0 966.5,752.8 1017.9,746.9 1022.4,727.8 1037.0,721.9 1066.5,719.0 1073.8,707.2 1093.0,714.6 1118.0,699.9 1125.3,685.2 1141.0,677.8" fill="none" stroke="#a58fae" stroke-width="2.6" stroke-opacity="0.85" stroke-linejoin="round"/>
<polyline points="510.3,821.6 514.4,850.6 491.7,860.9 489.6,883.7 477.2,887.8 450.2,866.4 426.0,896.5 408.0,905.6 395.9,890.5 374.7,896.5 359.7,917.6 335.5,920.7 305.4,917.6 290.3,902.6 281.2,875.4 263.1,860.3 257.1,830.2 275.2,806.0 295.0,788.0 300.8,775.0 334.6,766.0" fill="none" stroke="#a58fae" stroke-width="2.6" stroke-opacity="0.85" stroke-linejoin="round"/>
<polyline points="290.3,902.6 299.3,935.7 308.4,965.9 293.3,996.0 284.3,1029.0" fill="none" stroke="#a58fae" stroke-width="2.6" stroke-opacity="0.85" stroke-linejoin="round"/>
<polyline points="677.8,856.8 690.0,875.0 695.7,900.0 703.3,912.4 705.3,923.9 718.7,933.5 720.6,943.1 718.7,953.6 739.7,955.5 764.6,940.2 781.8,953.6 790.0,955.0 808.5,950.4 811.6,930.3 830.2,925.6 841.0,914.8 828.6,902.5 830.2,890.1 841.0,883.9 864.2,880.8 898.2,879.3 904.4,877.7" fill="none" stroke="#a58fae" stroke-width="2.6" stroke-opacity="0.85" stroke-linejoin="round"/>
<polyline points="853.6,846.5 870.0,852.0 879.6,855.0 884.3,864.0 904.4,877.7 929.1,908.6 952.3,921.0 975.5,928.7 1009.5,924.1 1021.8,917.9 1031.1,927.2 1032.7,950.4 1043.5,956.6 1040.4,970.5 1055.8,976.7 1046.6,982.8 1043.5,1001.4 1052.7,1012.2 1055.8,1029.0" fill="none" stroke="#a58fae" stroke-width="2.6" stroke-opacity="0.85" stroke-linejoin="round"/>
<polyline points="1021.8,917.9 1045.0,905.6 1075.9,893.2 1106.8,893.2 1122.3,899.4 1141.0,896.3" fill="none" stroke="#a58fae" stroke-width="2.6" stroke-opacity="0.85" stroke-linejoin="round"/>
<polyline points="1114.6,896.3 1130.0,919.5 1141.0,930.3" fill="none" stroke="#a58fae" stroke-width="2.6" stroke-opacity="0.85" stroke-linejoin="round"/>
<polyline points="790.0,973.6 836.4,978.2 854.9,976.7 870.4,992.1 905.9,973.6 929.1,982.8 972.4,985.9 1006.4,989.0 1021.8,1004.5 1043.5,1001.4" fill="none" stroke="#a58fae" stroke-width="2.6" stroke-opacity="0.85" stroke-linejoin="round"/>
<polyline points="1141.0,620.0 1120.0,650.0 1100.0,690.0" fill="none" stroke="#a58fae" stroke-width="2.6" stroke-opacity="0.85" stroke-linejoin="round"/>
<polyline points="239.0,727.8 268.4,735.0 286.0,751.0 300.8,760.0 334.6,766.0" fill="none" stroke="#a58fae" stroke-width="2.6" stroke-opacity="0.85" stroke-linejoin="round"/>
<polyline points="560.0,619.0 575.0,660.0 600.0,690.0 640.0,700.0" fill="none" stroke="#b8a6c0" stroke-width="1.2"/>
<polyline points="440.0,619.0 470.0,650.0 480.0,700.0 470.0,760.0" fill="none" stroke="#b8a6c0" stroke-width="1.2"/>
<polyline points="800.0,720.0 830.0,760.0 860.0,790.0" fill="none" stroke="#b8a6c0" stroke-width="1.2"/>
<polyline points="620.0,860.0 660.0,880.0 700.0,900.0" fill="none" stroke="#b8a6c0" stroke-width="1.2"/>
<polyline points="1000.0,760.0 1020.0,820.0 1060.0,850.0 1100.0,860.0" fill="none" stroke="#b8a6c0" stroke-width="1.2"/>
<polyline points="350.0,960.0 400.0,975.0 430.0,1000.0" fill="none" stroke="#b8a6c0" stroke-width="1.2"/>
<polyline points="520.0,900.0 560.0,925.0 600.0,930.0" fill="none" stroke="#b8a6c0" stroke-width="1.2"/>
<circle cx="385.6" cy="637.2" r="2.3" fill="#fff" stroke="#666" stroke-width="1"/>
<circle cx="571" cy="658" r="2.3" fill="#fff" stroke="#666" stroke-width="1"/>
<circle cx="540" cy="694.5" r="2.3" fill="#fff" stroke="#666" stroke-width="1"/>
<circle cx="485.2" cy="691.9" r="2.3" fill="#fff" stroke="#666" stroke-width="1"/>
<circle cx="580" cy="716.3" r="2.3" fill="#fff" stroke="#666" stroke-width="1"/>
<circle cx="352" cy="730.2" r="2.3" fill="#fff" stroke="#666" stroke-width="1"/>
<circle cx="335.6" cy="769.2" r="2.3" fill="#fff" stroke="#666" stroke-width="1"/>
<circle cx="395" cy="786.7" r="2.3" fill="#fff" stroke="#666" stroke-width="1"/>
<circle cx="671.3" cy="747.4" r="2.3" fill="#fff" stroke="#666" stroke-width="1"/>
<circle cx="875.6" cy="709.8" r="3.6" fill="#fff" stroke="#555" stroke-width="1.3"/><circle cx="875.6" cy="709.8" r="1.2" fill="#555"/>
<circle cx="919.4" cy="715.2" r="3.6" fill="#fff" stroke="#555" stroke-width="1.3"/><circle cx="919.4" cy="715.2" r="1.2" fill="#555"/>
<circle cx="952.2" cy="758.3" r="2.3" fill="#fff" stroke="#666" stroke-width="1"/>
<circle cx="1038.7" cy="774.7" r="3.6" fill="#fff" stroke="#555" stroke-width="1.3"/><circle cx="1038.7" cy="774.7" r="1.2" fill="#555"/>
<circle cx="240.8" cy="799.5" r="2.3" fill="#fff" stroke="#666" stroke-width="1"/>
<circle cx="890.2" cy="799.2" r="2.3" fill="#fff" stroke="#666" stroke-width="1"/>
<circle cx="1078" cy="828.7" r="2.3" fill="#fff" stroke="#666" stroke-width="1"/>
<circle cx="277.3" cy="862.3" r="2.3" fill="#fff" stroke="#666" stroke-width="1"/>
<circle cx="830.7" cy="860.4" r="2.3" fill="#fff" stroke="#666" stroke-width="1"/>
<circle cx="874.5" cy="882.3" r="2.3" fill="#fff" stroke="#666" stroke-width="1"/>
<circle cx="1106.5" cy="887.8" r="2.3" fill="#fff" stroke="#666" stroke-width="1"/>
<circle cx="248" cy="892.6" r="2.3" fill="#fff" stroke="#666" stroke-width="1"/>
<circle cx="682.2" cy="904.2" r="2.3" fill="#fff" stroke="#666" stroke-width="1"/>
<circle cx="988.7" cy="903.1" r="2.3" fill="#fff" stroke="#666" stroke-width="1"/>
<circle cx="851.1" cy="926.1" r="3.6" fill="#fff" stroke="#555" stroke-width="1.3"/><circle cx="851.1" cy="926.1" r="1.2" fill="#555"/>
<circle cx="1077.3" cy="899.5" r="2.3" fill="#fff" stroke="#666" stroke-width="1"/>
<circle cx="413.3" cy="926.1" r="2.3" fill="#fff" stroke="#666" stroke-width="1"/>
<circle cx="246.2" cy="917.7" r="2.3" fill="#fff" stroke="#666" stroke-width="1"/>
<circle cx="399.5" cy="959" r="2.3" fill="#fff" stroke="#666" stroke-width="1"/>
<circle cx="716.1" cy="940.7" r="2.3" fill="#fff" stroke="#666" stroke-width="1"/>
<circle cx="875.6" cy="954.6" r="2.3" fill="#fff" stroke="#666" stroke-width="1"/>
<circle cx="1017.9" cy="949.1" r="2.3" fill="#fff" stroke="#666" stroke-width="1"/>
<circle cx="825.6" cy="955.3" r="2.3" fill="#fff" stroke="#666" stroke-width="1"/>
<circle cx="598.3" cy="961.5" r="2.3" fill="#fff" stroke="#666" stroke-width="1"/>
<circle cx="545.4" cy="959" r="2.3" fill="#fff" stroke="#666" stroke-width="1"/>
<circle cx="757" cy="969.9" r="2.3" fill="#fff" stroke="#666" stroke-width="1"/>
<circle cx="465.9" cy="990.7" r="2.3" fill="#fff" stroke="#666" stroke-width="1"/>
<circle cx="975.9" cy="984.5" r="2.3" fill="#fff" stroke="#666" stroke-width="1"/>
<circle cx="399.5" cy="1002.7" r="2.3" fill="#fff" stroke="#666" stroke-width="1"/>
<circle cx="505.3" cy="1011.8" r="2.3" fill="#fff" stroke="#666" stroke-width="1"/>
<circle cx="1126.2" cy="1011.1" r="3.6" fill="#fff" stroke="#555" stroke-width="1.3"/><circle cx="1126.2" cy="1011.1" r="1.2" fill="#555"/>
<circle cx="924" cy="1015.5" r="2.3" fill="#fff" stroke="#666" stroke-width="1"/>
</svg></div>
<div class="a" style="left:239px;top:619px;width:902px;height:409.5px;overflow:hidden">
<div class="t" style="left:20.0px;top:0.2px;font-size:14.1px;color:#474747;text-shadow:0 0 2px #fff,0 0 2px #fff,0 0 3px #fff">Saarbrücken</div>
<div class="t" style="left:116.7px;top:18.4px;font-size:14.5px;color:#474747;text-shadow:0 0 2px #fff,0 0 2px #fff,0 0 3px #fff">Karlsruhe</div>
<div class="t" style="left:262.6px;top:31.2px;font-size:14.5px;color:#474747;text-shadow:0 0 2px #fff,0 0 2px #fff,0 0 3px #fff">Ingolstadt</div>
<div class="t" style="left:270.0px;top:58.7px;font-size:14px;color:#474747;text-shadow:0 0 2px #fff,0 0 2px #fff,0 0 3px #fff">Augsburg</div>
<div class="t" style="left:232.7px;top:76.7px;font-size:14.4px;color:#474747;text-shadow:0 0 2px #fff,0 0 2px #fff,0 0 3px #fff">Ulm</div>
<div class="t" style="left:86.8px;top:76.7px;font-size:14.1px;color:#474747;text-shadow:0 0 2px #fff,0 0 2px #fff,0 0 3px #fff">Freiburg</div>
<div class="t" style="left:75.5px;top:93.2px;font-size:14.4px;color:#474747;text-shadow:0 0 2px #fff,0 0 2px #fff,0 0 3px #fff">im Breisgau</div>
<div class="t" style="left:307.1px;top:101.8px;font-size:16.8px;color:#474747;text-shadow:0 0 2px #fff,0 0 2px #fff,0 0 3px #fff">München</div>
<div class="t" style="left:617.2px;top:68.9px;font-size:16.5px;color:#474747;text-shadow:0 0 2px #fff,0 0 2px #fff,0 0 3px #fff">Wien</div>
<div class="t" style="left:688.7px;top:88.8px;font-size:16.8px;color:#474747;text-shadow:0 0 2px #fff,0 0 2px #fff,0 0 3px #fff">Bratislava</div>
<div class="t" style="left:81.0px;top:131.6px;font-size:13.6px;color:#474747;text-shadow:0 0 2px #fff,0 0 2px #fff,0 0 3px #fff">Basel</div>
<div class="t" style="left:132.0px;top:145.3px;font-size:17px;color:#474747;text-shadow:0 0 2px #fff,0 0 2px #fff,0 0 3px #fff">Zürich</div>
<div class="t" style="left:404.2px;top:131.6px;font-size:13.8px;color:#474747;text-shadow:0 0 2px #fff,0 0 2px #fff,0 0 3px #fff">Salzburg</div>
<div class="t" style="left:698.6px;top:122.4px;font-size:13.2px;color:#474747;text-shadow:0 0 2px #fff,0 0 2px #fff,0 0 3px #fff">Győr</div>
<div class="t" style="left:764.3px;top:134.3px;font-size:16.7px;color:#474747;text-shadow:0 0 2px #fff,0 0 2px #fff,0 0 3px #fff">Budapest</div>
<div class="t" style="left:6.5px;top:173.3px;font-size:13.7px;color:#474747;text-shadow:0 0 2px #fff,0 0 2px #fff,0 0 3px #fff">Besançon</div>
<div class="t" style="left:611.0px;top:162.6px;font-size:13.9px;color:#474747;text-shadow:0 0 2px #fff,0 0 2px #fff,0 0 3px #fff">Szombathely</div>
<div class="t" style="left:805.5px;top:211.9px;font-size:13.8px;color:#474747;text-shadow:0 0 2px #fff,0 0 2px #fff,0 0 3px #fff">Kecskemét</div>
<div class="t" style="left:8.0px;top:226.5px;font-size:13.8px;color:#474747;text-shadow:0 0 2px #fff,0 0 2px #fff,0 0 3px #fff">Lausanne</div>
<div class="t" style="left:567.3px;top:222.7px;font-size:14.2px;color:#474747;text-shadow:0 0 2px #fff,0 0 2px #fff,0 0 3px #fff">Maribor</div>
<div class="t" style="left:607.4px;top:246.3px;font-size:13.8px;color:#474747;text-shadow:0 0 2px #fff,0 0 2px #fff,0 0 3px #fff">Varaždin</div>
<div class="t" style="left:845.6px;top:250.3px;font-size:13.1px;color:#474747;text-shadow:0 0 2px #fff,0 0 2px #fff,0 0 3px #fff">Szeged</div>
<div class="t" style="left:2.9px;top:253.8px;font-size:13.5px;color:#474747;text-shadow:0 0 2px #fff,0 0 2px #fff,0 0 3px #fff">enève</div>
<div class="t" style="left:421.3px;top:250.2px;font-size:13.6px;color:#474747;text-shadow:0 0 2px #fff,0 0 2px #fff,0 0 3px #fff">Udine /</div>
<div class="t" style="left:428.6px;top:266.6px;font-size:13.6px;color:#474747;text-shadow:0 0 2px #fff,0 0 2px #fff,0 0 3px #fff">Udin</div>
<div class="t" style="left:735.1px;top:266.4px;font-size:13px;color:#474747;text-shadow:0 0 2px #fff,0 0 2px #fff,0 0 3px #fff">Pécs</div>
<div class="t" style="left:585.5px;top:283.8px;font-size:16.9px;color:#474747;text-shadow:0 0 2px #fff,0 0 2px #fff,0 0 3px #fff">Zagreb</div>
<div class="t" style="left:806.2px;top:284.8px;font-size:13.8px;color:#474747;text-shadow:0 0 2px #fff,0 0 2px #fff,0 0 3px #fff">Суботица</div>
<div class="t" style="left:152.4px;top:288.5px;font-size:13.6px;color:#474747;text-shadow:0 0 2px #fff,0 0 2px #fff,0 0 3px #fff">Varese</div>
<div class="t" style="left:2.9px;top:303.1px;font-size:13.5px;color:#474747;text-shadow:0 0 2px #fff,0 0 2px #fff,0 0 3px #fff">necy</div>
<div class="t" style="left:137.9px;top:321.3px;font-size:13.8px;color:#474747;text-shadow:0 0 2px #fff,0 0 2px #fff,0 0 3px #fff">Novara</div>
<div class="t" style="left:456.0px;top:323.2px;font-size:13.6px;color:#474747;text-shadow:0 0 2px #fff,0 0 2px #fff,0 0 3px #fff">Trieste</div>
<div class="t" style="left:642.8px;top:328.7px;font-size:13.2px;color:#474747;text-shadow:0 0 2px #fff,0 0 2px #fff,0 0 3px #fff">Sisak</div>
<div class="t" style="left:758.8px;top:335.2px;font-size:13.8px;color:#474747;text-shadow:0 0 2px #fff,0 0 2px #fff,0 0 3px #fff">Osijek</div>
<div class="t" style="left:560.0px;top:337.9px;font-size:13.4px;color:#474747;text-shadow:0 0 2px #fff,0 0 2px #fff,0 0 3px #fff">Karlovac</div>
<div class="t" style="left:364.8px;top:335.2px;font-size:13.8px;color:#474747;text-shadow:0 0 2px #fff,0 0 2px #fff,0 0 3px #fff">Padova</div>
<div class="t" style="left:284.5px;top:342.5px;font-size:13.6px;color:#474747;text-shadow:0 0 2px #fff,0 0 2px #fff,0 0 3px #fff">Verona</div>
<div class="t" style="left:672.0px;top:348.7px;font-size:13.6px;color:#474747;text-shadow:0 0 2px #fff,0 0 2px #fff,0 0 3px #fff">Slavonski</div>
<div class="t" style="left:0.0px;top:363.3px;font-size:13.5px;color:#474747;text-shadow:0 0 2px #fff,0 0 2px #fff,0 0 3px #fff">le</div>
<div class="t" style="left:499.0px;top:356.1px;font-size:13.4px;color:#474747;text-shadow:0 0 2px #fff,0 0 2px #fff,0 0 3px #fff">Rijeka</div>
<div class="t" style="left:199.9px;top:356.1px;font-size:13.3px;color:#474747;text-shadow:0 0 2px #fff,0 0 2px #fff,0 0 3px #fff">Piacenza</div>
<div class="t" style="left:700.4px;top:364.4px;font-size:14px;color:#474747;text-shadow:0 0 2px #fff,0 0 2px #fff,0 0 3px #fff">Brod</div>
<div class="t" style="left:124.0px;top:387.0px;font-size:14px;color:#474747;text-shadow:0 0 2px #fff,0 0 2px #fff,0 0 3px #fff">Alessandria</div>
<div class="t" style="left:246.2px;top:396.1px;font-size:13.8px;color:#474747;text-shadow:0 0 2px #fff,0 0 2px #fff,0 0 3px #fff">Parma</div>
<div class="t" style="left:298.4px;top:399.8px;font-size:16.8px;color:#474747;text-shadow:0 0 2px #fff,0 0 2px #fff,0 0 3px #fff">Bologna</div>
<div class="t" style="left:760.6px;top:399.8px;font-size:13.8px;color:#474747;text-shadow:0 0 2px #fff,0 0 2px #fff,0 0 3px #fff">Tuzla</div>
<div class="t" style="left:855.5px;top:397.3px;font-size:16.8px;color:#474747;text-shadow:0 0 2px #fff,0 0 2px #fff,0 0 3px #fff">Београд</div>
<div class="t" style="left:653.0px;top:401.8px;font-size:13.8px;color:#474747;text-shadow:0 0 2px #fff,0 0 2px #fff,0 0 3px #fff">Banja Luka</div>
<div class="t" style="left:882.8px;top:82.4px;font-size:13.8px;color:#474747;text-shadow:0 0 2px #fff,0 0 2px #fff,0 0 3px #fff">Mis</div>
<div class="t" style="left:114.9px;top:189.4px;font-size:17.6px;color:#866692;text-shadow:0 0 2px #fff,0 0 2px #fff">Schweiz/</div>
<div class="t" style="left:84.6px;top:209.5px;font-size:17.7px;color:#866692;text-shadow:0 0 2px #fff,0 0 2px #fff">Suisse/Svizzera/</div>
<div class="t" style="left:125.8px;top:229.5px;font-size:17.5px;color:#866692;text-shadow:0 0 2px #fff,0 0 2px #fff">Svizra</div>
<div class="t" style="left:494.3px;top:130.1px;font-size:18.3px;color:#866692;text-shadow:0 0 2px #fff,0 0 2px #fff">Österreich</div>
<div class="t" style="left:747.9px;top:179.6px;font-size:18px;color:#866692;text-shadow:0 0 2px #fff,0 0 2px #fff">Magyarország</div>
<div class="t" style="left:493.2px;top:270.7px;font-size:17.8px;color:#866692;text-shadow:0 0 2px #fff,0 0 2px #fff">Slovenija</div>
<div class="t" style="left:795.3px;top:39.2px;font-size:17.6px;color:#866692;text-shadow:0 0 2px #fff,0 0 2px #fff">Slovensko</div>
<div class="t" style="left:127.6px;top:40.4px;font-size:13.6px;color:#8c6c98;font-style:italic;text-shadow:0 0 2px #fff,0 0 2px #fff">Baden-Württemberg</div>
<div class="t" style="left:344.7px;top:16.9px;font-size:13.3px;color:#8c6c98;font-style:italic;text-shadow:0 0 2px #fff,0 0 2px #fff">Bayern</div>
<div class="t" style="left:423.1px;top:91.6px;font-size:13.2px;color:#8c6c98;font-style:italic;text-shadow:0 0 2px #fff,0 0 2px #fff">Oberösterreich</div>
<div class="t" style="left:304.6px;top:170.1px;font-size:12.6px;color:#8c6c98;font-style:italic;text-shadow:0 0 2px #fff,0 0 2px #fff">Tirol</div>
<div class="t" style="left:518.0px;top:173.7px;font-size:13.4px;color:#8c6c98;font-style:italic;text-shadow:0 0 2px #fff,0 0 2px #fff">Steiermark</div>
<div class="t" style="left:679.6px;top:202.8px;font-size:14px;color:#8c6c98;font-style:italic;text-shadow:0 0 2px #fff,0 0 2px #fff">Dunántúl</div>
<div class="t" style="left:463.3px;top:215.6px;font-size:13.3px;color:#8c6c98;font-style:italic;text-shadow:0 0 2px #fff,0 0 2px #fff">Kärnten</div>
<div class="t" style="left:295.5px;top:232.1px;font-size:13px;color:#8c6c98;font-style:italic;text-shadow:0 0 2px #fff,0 0 2px #fff">Trentino-</div>
<div class="t" style="left:288.2px;top:248.4px;font-size:13.5px;color:#8c6c98;font-style:italic;text-shadow:0 0 2px #fff,0 0 2px #fff">Alto Adige/</div>
<div class="t" style="left:298.4px;top:264.9px;font-size:13.1px;color:#8c6c98;font-style:italic;text-shadow:0 0 2px #fff,0 0 2px #fff">Südtirol</div>
<div class="t" style="left:353.1px;top:305.1px;font-size:12.8px;color:#8c6c98;font-style:italic;text-shadow:0 0 2px #fff,0 0 2px #fff">Veneto</div>
<div class="t" style="left:193.3px;top:312.2px;font-size:13.9px;color:#8c6c98;font-style:italic;text-shadow:0 0 2px #fff,0 0 2px #fff">Lombardia</div>
<div class="t" style="left:84.6px;top:346.9px;font-size:12.9px;color:#8c6c98;font-style:italic;text-shadow:0 0 2px #fff,0 0 2px #fff">Piemonte</div>
<div class="t" style="left:824.5px;top:335.9px;font-size:13.9px;color:#8c6c98;font-style:italic;text-shadow:0 0 2px #fff,0 0 2px #fff">Војводина</div>
<div class="t" style="left:499.8px;top:-3.3px;font-size:13px;color:#8c6c98;font-style:italic;text-shadow:0 0 2px #fff,0 0 2px #fff">Jihočeský</div>
<div class="t" style="left:516.0px;top:12.9px;font-size:13px;color:#8c6c98;font-style:italic;text-shadow:0 0 2px #fff,0 0 2px #fff">kraj</div>
<div class="t" style="left:890.0px;top:162.7px;font-size:13px;color:#8c6c98;font-style:italic;text-shadow:0 0 2px #fff,0 0 2px #fff">Al</div>
<svg style="left:0;top:0" width="902" height="410" viewBox="239 619 902 410"><path d="M471.2 769.3 L479.7 784.3 L488.2 769.3Z" fill="#4a00dd"/><circle cx="479.7" cy="766.3" r="9.6" fill="#4a00dd"/><path d="M778.1 768.6 L786.6 783.6 L795.1 768.6Z" fill="#4a00dd"/><circle cx="786.6" cy="765.6" r="9.6" fill="#4a00dd"/></svg>
<div class="t" style="left:219px;top:151.60000000000002px;font-size:9px;font-weight:bold;color:#000;text-shadow:0 0 2px #fff,0 0 1px #fff">Turbine02</div>
<div class="t" style="left:527px;top:150.60000000000002px;font-size:9px;font-weight:bold;color:#000;text-shadow:0 0 2px #fff,0 0 1px #fff">Turbine01</div>
</div>
<div class="a" style="left:248px;top:628px;width:21px;height:43.5px;border-radius:2px;background:#fff;box-shadow:0 0 0 1.5px rgba(0,0,0,0.12)"></div>
<div class="a" style="left:248px;top:649.5px;width:21px;height:0.8px;background:#ddd"></div>
<svg style="left:248px;top:628px" width="21" height="44"><path d="M10.5 5.5 V15.5 M5.5 10.5 H15.5" stroke="#333" stroke-width="1.8"/><path d="M5.5 32.3 H15.5" stroke="#333" stroke-width="1.8"/></svg>
</body></html>
